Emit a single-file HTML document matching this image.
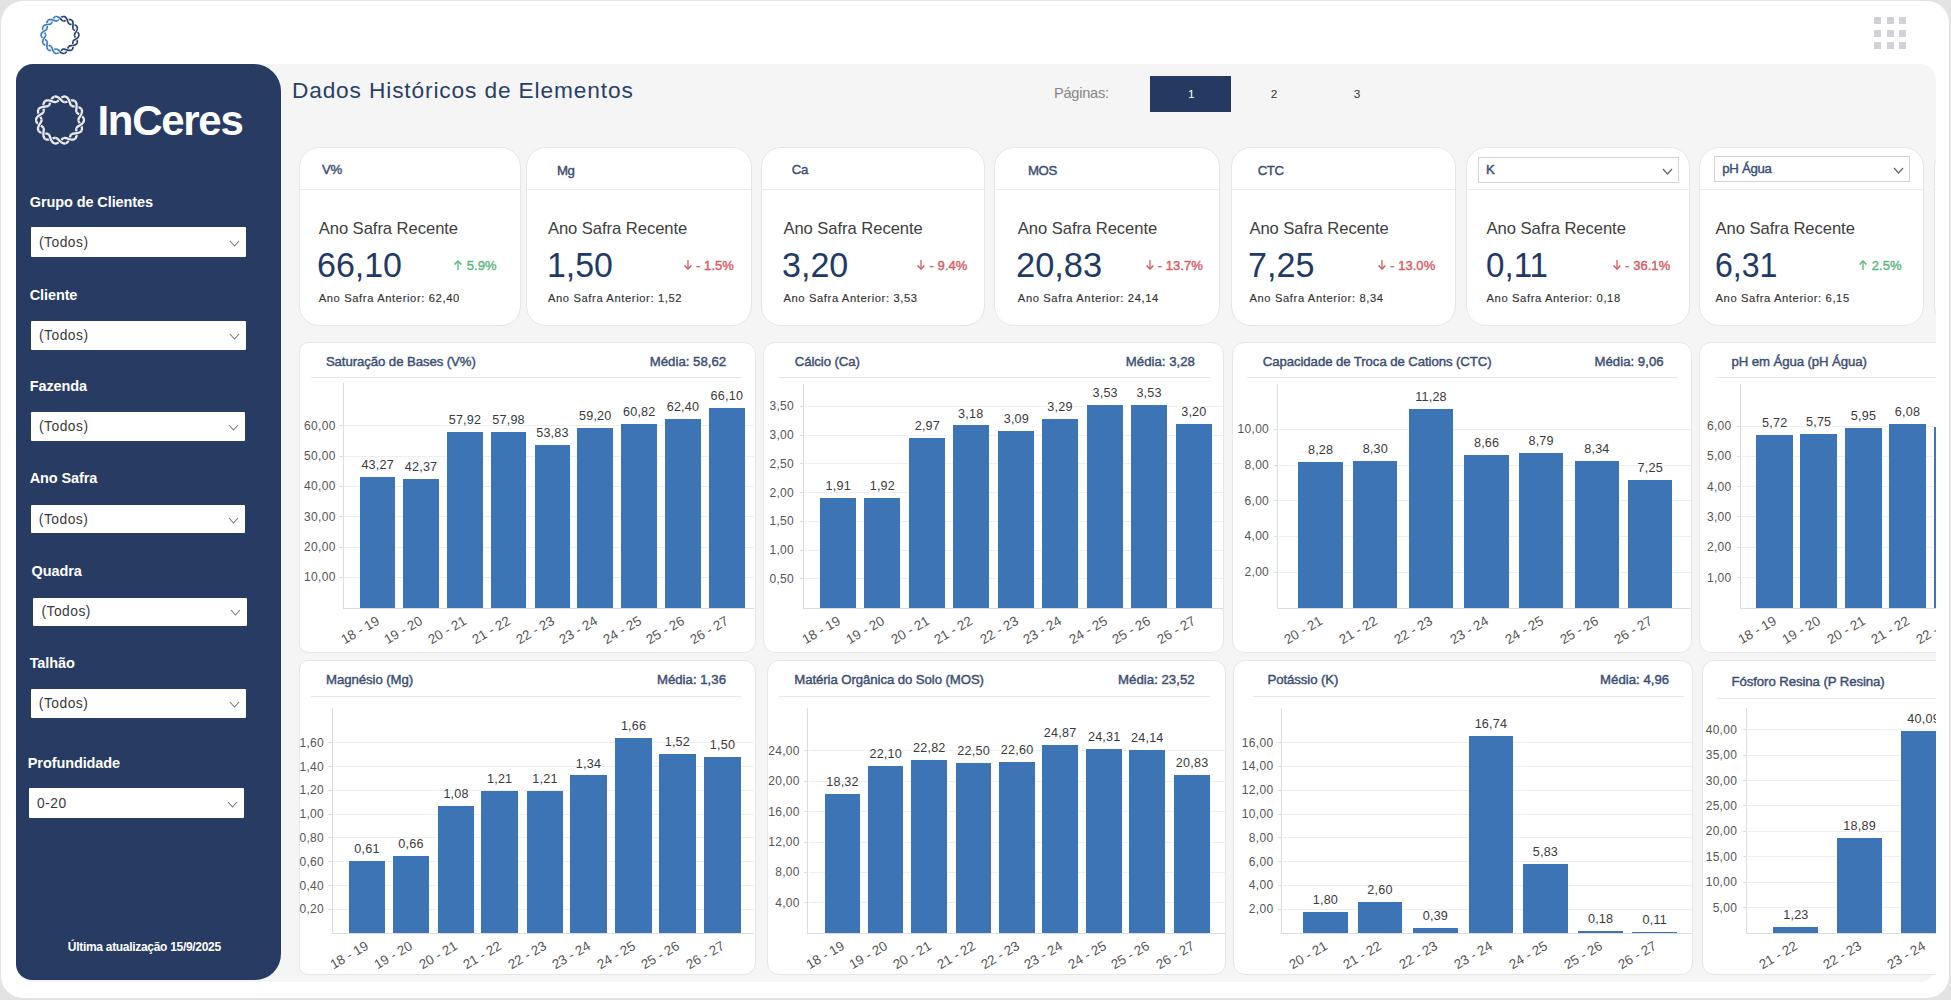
<!DOCTYPE html><html><head><meta charset="utf-8"><style>
html,body{margin:0;padding:0;}
body{width:1951px;height:1000px;overflow:hidden;background:#e3e3e3;position:relative;font-family:"Liberation Sans", sans-serif;}
.t{position:absolute;white-space:nowrap;}
.r{position:absolute;}
</style></head><body>
<div class="r" style="left:1.00px;top:1.00px;width:1948.00px;height:997.00px;background:#ffffff;border-radius:22px;"></div>
<div class="r" style="left:16.00px;top:64.00px;width:1920.00px;height:918.00px;background:#f5f5f5;border-radius:16px;"></div>
<svg style="position:absolute;left:40px;top:15px" width="40" height="40" viewBox="0 0 40 40"><path d="M38.90,20.00L38.86,20.49" stroke="#253f6e" stroke-width="1.7" fill="none"/><path d="M33.09,26.24L32.94,26.60L32.85,26.98L32.81,27.40L32.81,27.85L32.84,28.34L32.90,28.86L32.96,29.42L33.02,29.99L33.07,30.58L33.09,31.18L33.08,31.77L33.02,32.35L32.91,32.91L32.74,33.43L32.52,33.90L32.24,34.33L31.89,34.69L31.49,34.98" stroke="#253f6e" stroke-width="1.7" fill="none"/><path d="M23.39,34.11L23.02,34.19L22.66,34.35L22.31,34.56L21.95,34.83L21.59,35.14L21.22,35.50L20.83,35.89L20.43,36.29L20.00,36.70L19.55,37.10" stroke="#253f6e" stroke-width="1.7" fill="none"/><path d="M20.00,36.70L19.55,37.10L19.08,37.46L18.60,37.79L18.10,38.07L17.59,38.29L17.08,38.43L16.57,38.49L16.07,38.48L15.59,38.37" stroke="#3b7ac6" stroke-width="1.7" fill="none"/><path d="M11.16,31.52L10.87,31.27L10.54,31.07L10.17,30.92L9.75,30.80L9.29,30.71L8.79,30.64L8.25,30.58L7.69,30.51L7.11,30.44L6.52,30.34L5.94,30.22L5.37,30.05L4.83,29.85L4.33,29.60L3.89,29.30L3.50,28.96L3.18,28.57L2.94,28.14" stroke="#3b7ac6" stroke-width="1.7" fill="none"/><path d="M5.50,20.00L5.47,19.62L5.37,19.23L5.22,18.84L5.02,18.43L4.77,18.00L4.49,17.54L4.19,17.07L3.89,16.58L3.59,16.06L3.32,15.53L3.08,14.99L2.89,14.44L2.75,13.89L2.69,13.35L2.69,12.83L2.78,12.33L2.94,11.86L3.18,11.43" stroke="#3b7ac6" stroke-width="1.7" fill="none"/><path d="M10.87,8.73L11.16,8.48L11.41,8.18L11.64,7.83L11.84,7.43L12.02,6.98L12.20,6.49L12.38,5.97L12.57,5.43L12.79,4.87L13.02,4.33L13.29,3.79L13.59,3.29L13.92,2.83L14.29,2.42L14.69,2.08L15.13,1.82L15.59,1.63L16.07,1.52" stroke="#3b7ac6" stroke-width="1.7" fill="none"/><path d="M23.02,5.81L23.39,5.89L23.77,5.92L24.18,5.89L24.61,5.81L25.07,5.69L25.56,5.53L26.07,5.35L26.61,5.16L27.16,4.98L27.74,4.81L28.32,4.68L28.90,4.58L29.47,4.54L30.03,4.56L30.55,4.64L31.05,4.80L31.49,5.02L31.89,5.31" stroke="#253f6e" stroke-width="1.7" fill="none"/><path d="M32.94,13.40L33.09,13.76L33.29,14.08L33.55,14.39L33.87,14.68L34.24,14.96L34.65,15.24L35.10,15.53L35.58,15.83L36.07,16.14L36.56,16.48L37.03,16.84L37.48,17.23L37.88,17.65L38.23,18.08L38.52,18.54L38.73,19.02L38.86,19.51L38.90,20.00" stroke="#253f6e" stroke-width="1.7" fill="none"/><path d="M34.50,20.00L34.53,20.38L34.63,20.77L34.78,21.16L34.98,21.57L35.23,22.00L35.51,22.46L35.81,22.93L36.11,23.42L36.41,23.94L36.68,24.47L36.92,25.01L37.11,25.56L37.25,26.11L37.31,26.65L37.31,27.17L37.22,27.67L37.06,28.14L36.82,28.57" stroke="#253f6e" stroke-width="1.7" fill="none"/><path d="M29.13,31.27L28.84,31.52L28.59,31.82L28.36,32.17L28.16,32.57L27.98,33.02L27.80,33.51L27.62,34.03L27.43,34.57L27.21,35.13L26.98,35.67L26.71,36.21L26.41,36.71L26.08,37.17L25.71,37.58L25.31,37.92L24.87,38.18L24.41,38.37L23.93,38.48" stroke="#253f6e" stroke-width="1.7" fill="none"/><path d="M16.98,34.19L16.61,34.11L16.23,34.08L15.82,34.11L15.39,34.19L14.93,34.31L14.44,34.47L13.93,34.65L13.39,34.84L12.84,35.02L12.26,35.19L11.68,35.32L11.10,35.42L10.53,35.46L9.97,35.44L9.45,35.36L8.95,35.20L8.51,34.98L8.11,34.69" stroke="#3b7ac6" stroke-width="1.7" fill="none"/><path d="M7.06,26.60L6.91,26.24L6.71,25.92L6.45,25.61L6.13,25.32L5.76,25.04L5.35,24.76L4.90,24.47L4.42,24.17L3.93,23.86L3.44,23.52L2.97,23.16L2.52,22.77L2.12,22.35L1.77,21.92L1.48,21.46L1.27,20.98L1.14,20.49L1.10,20.00L1.14,19.51" stroke="#3b7ac6" stroke-width="1.7" fill="none"/><path d="M6.91,13.76L7.06,13.40L7.15,13.02L7.19,12.60L7.19,12.15L7.16,11.66L7.10,11.14L7.04,10.58L6.98,10.01L6.93,9.42L6.91,8.82L6.92,8.23L6.98,7.65L7.09,7.09L7.26,6.57L7.48,6.10L7.76,5.67L8.11,5.31L8.51,5.02" stroke="#3b7ac6" stroke-width="1.7" fill="none"/><path d="M16.61,5.89L16.98,5.81L17.34,5.65L17.69,5.44L18.05,5.17L18.41,4.86L18.78,4.50L19.17,4.11L19.57,3.71L20.00,3.30L20.45,2.90" stroke="#3b7ac6" stroke-width="1.7" fill="none"/><path d="M20.00,3.30L20.45,2.90L20.92,2.54L21.40,2.21L21.90,1.93L22.41,1.71L22.92,1.57L23.43,1.51L23.93,1.52L24.41,1.63" stroke="#253f6e" stroke-width="1.7" fill="none"/><path d="M28.84,8.48L29.13,8.73L29.46,8.93L29.83,9.08L30.25,9.20L30.71,9.29L31.21,9.36L31.75,9.42L32.31,9.49L32.89,9.56L33.48,9.66L34.06,9.78L34.63,9.95L35.17,10.15L35.67,10.40L36.11,10.70L36.50,11.04L36.82,11.43L37.06,11.86" stroke="#253f6e" stroke-width="1.7" fill="none"/><path d="M38.90,20.00L38.86,20.49L38.73,20.98L38.52,21.46L38.23,21.92L37.88,22.35L37.48,22.77L37.03,23.16L36.56,23.52L36.07,23.86L35.58,24.17L35.10,24.47L34.65,24.76L34.24,25.04L33.87,25.32L33.55,25.61L33.29,25.92L33.09,26.24L32.94,26.60" stroke="#ffffff" stroke-width="3.0999999999999996" fill="none" stroke-linecap="butt"/><path d="M31.89,34.69L31.49,34.98L31.05,35.20L30.55,35.36L30.03,35.44L29.47,35.46L28.90,35.42L28.32,35.32L27.74,35.19L27.16,35.02L26.61,34.84L26.07,34.65L25.56,34.47L25.07,34.31L24.61,34.19L24.18,34.11L23.77,34.08L23.39,34.11L23.02,34.19" stroke="#ffffff" stroke-width="3.0999999999999996" fill="none" stroke-linecap="butt"/><path d="M16.07,38.48L15.59,38.37L15.13,38.18L14.69,37.92L14.29,37.58L13.92,37.17L13.59,36.71L13.29,36.21L13.02,35.67L12.79,35.13L12.57,34.57L12.38,34.03L12.20,33.51L12.02,33.02L11.84,32.57L11.64,32.17L11.41,31.82L11.16,31.52L10.87,31.27" stroke="#ffffff" stroke-width="3.0999999999999996" fill="none" stroke-linecap="butt"/><path d="M3.18,28.57L2.94,28.14L2.78,27.67L2.69,27.17L2.69,26.65L2.75,26.11L2.89,25.56L3.08,25.01L3.32,24.47L3.59,23.94L3.89,23.42L4.19,22.93L4.49,22.46L4.77,22.00L5.02,21.57L5.22,21.16L5.37,20.77L5.47,20.38L5.50,20.00L5.47,19.62" stroke="#ffffff" stroke-width="3.0999999999999996" fill="none" stroke-linecap="butt"/><path d="M2.94,11.86L3.18,11.43L3.50,11.04L3.89,10.70L4.33,10.40L4.83,10.15L5.37,9.95L5.94,9.78L6.52,9.66L7.11,9.56L7.69,9.49L8.25,9.42L8.79,9.36L9.29,9.29L9.75,9.20L10.17,9.08L10.54,8.93L10.87,8.73L11.16,8.48" stroke="#ffffff" stroke-width="3.0999999999999996" fill="none" stroke-linecap="butt"/><path d="M15.59,1.63L16.07,1.52L16.57,1.51L17.08,1.57L17.59,1.71L18.10,1.93L18.60,2.21L19.08,2.54L19.55,2.90L20.00,3.30L20.43,3.71" stroke="#ffffff" stroke-width="3.0999999999999996" fill="none" stroke-linecap="butt"/><path d="M20.00,3.30L20.43,3.71L20.83,4.11L21.22,4.50L21.59,4.86L21.95,5.17L22.31,5.44L22.66,5.65L23.02,5.81L23.39,5.89" stroke="#ffffff" stroke-width="3.0999999999999996" fill="none" stroke-linecap="butt"/><path d="M31.49,5.02L31.89,5.31L32.24,5.67L32.52,6.10L32.74,6.57L32.91,7.09L33.02,7.65L33.08,8.23L33.09,8.82L33.07,9.42L33.02,10.01L32.96,10.58L32.90,11.14L32.84,11.66L32.81,12.15L32.81,12.60L32.85,13.02L32.94,13.40L33.09,13.76" stroke="#ffffff" stroke-width="3.0999999999999996" fill="none" stroke-linecap="butt"/><path d="M34.50,20.00L34.53,20.38" stroke="#ffffff" stroke-width="3.0999999999999996" fill="none" stroke-linecap="butt"/><path d="M37.06,28.14L36.82,28.57L36.50,28.96L36.11,29.30L35.67,29.60L35.17,29.85L34.63,30.05L34.06,30.22L33.48,30.34L32.89,30.44L32.31,30.51L31.75,30.58L31.21,30.64L30.71,30.71L30.25,30.80L29.83,30.92L29.46,31.07L29.13,31.27L28.84,31.52" stroke="#ffffff" stroke-width="3.0999999999999996" fill="none" stroke-linecap="butt"/><path d="M24.41,38.37L23.93,38.48L23.43,38.49L22.92,38.43L22.41,38.29L21.90,38.07L21.40,37.79L20.92,37.46L20.45,37.10L20.00,36.70L19.57,36.29" stroke="#ffffff" stroke-width="3.0999999999999996" fill="none" stroke-linecap="butt"/><path d="M20.00,36.70L19.57,36.29L19.17,35.89L18.78,35.50L18.41,35.14L18.05,34.83L17.69,34.56L17.34,34.35L16.98,34.19L16.61,34.11" stroke="#ffffff" stroke-width="3.0999999999999996" fill="none" stroke-linecap="butt"/><path d="M8.51,34.98L8.11,34.69L7.76,34.33L7.48,33.90L7.26,33.43L7.09,32.91L6.98,32.35L6.92,31.77L6.91,31.18L6.93,30.58L6.98,29.99L7.04,29.42L7.10,28.86L7.16,28.34L7.19,27.85L7.19,27.40L7.15,26.98L7.06,26.60L6.91,26.24" stroke="#ffffff" stroke-width="3.0999999999999996" fill="none" stroke-linecap="butt"/><path d="M1.10,20.00L1.14,19.51L1.27,19.02L1.48,18.54L1.77,18.08L2.12,17.65L2.52,17.23L2.97,16.84L3.44,16.48L3.93,16.14L4.42,15.83L4.90,15.53L5.35,15.24L5.76,14.96L6.13,14.68L6.45,14.39L6.71,14.08L6.91,13.76L7.06,13.40" stroke="#ffffff" stroke-width="3.0999999999999996" fill="none" stroke-linecap="butt"/><path d="M8.11,5.31L8.51,5.02L8.95,4.80L9.45,4.64L9.97,4.56L10.53,4.54L11.10,4.58L11.68,4.68L12.26,4.81L12.84,4.98L13.39,5.16L13.93,5.35L14.44,5.53L14.93,5.69L15.39,5.81L15.82,5.89L16.23,5.92L16.61,5.89L16.98,5.81" stroke="#ffffff" stroke-width="3.0999999999999996" fill="none" stroke-linecap="butt"/><path d="M23.93,1.52L24.41,1.63L24.87,1.82L25.31,2.08L25.71,2.42L26.08,2.83L26.41,3.29L26.71,3.79L26.98,4.33L27.21,4.87L27.43,5.43L27.62,5.97L27.80,6.49L27.98,6.98L28.16,7.43L28.36,7.83L28.59,8.18L28.84,8.48L29.13,8.73" stroke="#ffffff" stroke-width="3.0999999999999996" fill="none" stroke-linecap="butt"/><path d="M36.82,11.43L37.06,11.86L37.22,12.33L37.31,12.83L37.31,13.35L37.25,13.89L37.11,14.44L36.92,14.99L36.68,15.53L36.41,16.06L36.11,16.58L35.81,17.07L35.51,17.54L35.23,18.00L34.98,18.43L34.78,18.84L34.63,19.23L34.53,19.62L34.50,20.00" stroke="#ffffff" stroke-width="3.0999999999999996" fill="none" stroke-linecap="butt"/><path d="M38.90,20.00L38.86,20.49L38.73,20.98L38.52,21.46L38.23,21.92L37.88,22.35L37.48,22.77L37.03,23.16L36.56,23.52L36.07,23.86L35.58,24.17L35.10,24.47L34.65,24.76L34.24,25.04L33.87,25.32L33.55,25.61L33.29,25.92L33.09,26.24L32.94,26.60" stroke="#253f6e" stroke-width="1.7" fill="none"/><path d="M31.89,34.69L31.49,34.98L31.05,35.20L30.55,35.36L30.03,35.44L29.47,35.46L28.90,35.42L28.32,35.32L27.74,35.19L27.16,35.02L26.61,34.84L26.07,34.65L25.56,34.47L25.07,34.31L24.61,34.19L24.18,34.11L23.77,34.08L23.39,34.11L23.02,34.19" stroke="#253f6e" stroke-width="1.7" fill="none"/><path d="M16.07,38.48L15.59,38.37L15.13,38.18L14.69,37.92L14.29,37.58L13.92,37.17L13.59,36.71L13.29,36.21L13.02,35.67L12.79,35.13L12.57,34.57L12.38,34.03L12.20,33.51L12.02,33.02L11.84,32.57L11.64,32.17L11.41,31.82L11.16,31.52L10.87,31.27" stroke="#3b7ac6" stroke-width="1.7" fill="none"/><path d="M3.18,28.57L2.94,28.14L2.78,27.67L2.69,27.17L2.69,26.65L2.75,26.11L2.89,25.56L3.08,25.01L3.32,24.47L3.59,23.94L3.89,23.42L4.19,22.93L4.49,22.46L4.77,22.00L5.02,21.57L5.22,21.16L5.37,20.77L5.47,20.38L5.50,20.00L5.47,19.62" stroke="#3b7ac6" stroke-width="1.7" fill="none"/><path d="M2.94,11.86L3.18,11.43L3.50,11.04L3.89,10.70L4.33,10.40L4.83,10.15L5.37,9.95L5.94,9.78L6.52,9.66L7.11,9.56L7.69,9.49L8.25,9.42L8.79,9.36L9.29,9.29L9.75,9.20L10.17,9.08L10.54,8.93L10.87,8.73L11.16,8.48" stroke="#3b7ac6" stroke-width="1.7" fill="none"/><path d="M15.59,1.63L16.07,1.52L16.57,1.51L17.08,1.57L17.59,1.71L18.10,1.93L18.60,2.21L19.08,2.54L19.55,2.90L20.00,3.30L20.43,3.71" stroke="#3b7ac6" stroke-width="1.7" fill="none"/><path d="M20.00,3.30L20.43,3.71L20.83,4.11L21.22,4.50L21.59,4.86L21.95,5.17L22.31,5.44L22.66,5.65L23.02,5.81L23.39,5.89" stroke="#253f6e" stroke-width="1.7" fill="none"/><path d="M31.49,5.02L31.89,5.31L32.24,5.67L32.52,6.10L32.74,6.57L32.91,7.09L33.02,7.65L33.08,8.23L33.09,8.82L33.07,9.42L33.02,10.01L32.96,10.58L32.90,11.14L32.84,11.66L32.81,12.15L32.81,12.60L32.85,13.02L32.94,13.40L33.09,13.76" stroke="#253f6e" stroke-width="1.7" fill="none"/><path d="M34.50,20.00L34.53,20.38" stroke="#253f6e" stroke-width="1.7" fill="none"/><path d="M37.06,28.14L36.82,28.57L36.50,28.96L36.11,29.30L35.67,29.60L35.17,29.85L34.63,30.05L34.06,30.22L33.48,30.34L32.89,30.44L32.31,30.51L31.75,30.58L31.21,30.64L30.71,30.71L30.25,30.80L29.83,30.92L29.46,31.07L29.13,31.27L28.84,31.52" stroke="#253f6e" stroke-width="1.7" fill="none"/><path d="M24.41,38.37L23.93,38.48L23.43,38.49L22.92,38.43L22.41,38.29L21.90,38.07L21.40,37.79L20.92,37.46L20.45,37.10L20.00,36.70L19.57,36.29" stroke="#253f6e" stroke-width="1.7" fill="none"/><path d="M20.00,36.70L19.57,36.29L19.17,35.89L18.78,35.50L18.41,35.14L18.05,34.83L17.69,34.56L17.34,34.35L16.98,34.19L16.61,34.11" stroke="#3b7ac6" stroke-width="1.7" fill="none"/><path d="M8.51,34.98L8.11,34.69L7.76,34.33L7.48,33.90L7.26,33.43L7.09,32.91L6.98,32.35L6.92,31.77L6.91,31.18L6.93,30.58L6.98,29.99L7.04,29.42L7.10,28.86L7.16,28.34L7.19,27.85L7.19,27.40L7.15,26.98L7.06,26.60L6.91,26.24" stroke="#3b7ac6" stroke-width="1.7" fill="none"/><path d="M1.10,20.00L1.14,19.51L1.27,19.02L1.48,18.54L1.77,18.08L2.12,17.65L2.52,17.23L2.97,16.84L3.44,16.48L3.93,16.14L4.42,15.83L4.90,15.53L5.35,15.24L5.76,14.96L6.13,14.68L6.45,14.39L6.71,14.08L6.91,13.76L7.06,13.40" stroke="#3b7ac6" stroke-width="1.7" fill="none"/><path d="M8.11,5.31L8.51,5.02L8.95,4.80L9.45,4.64L9.97,4.56L10.53,4.54L11.10,4.58L11.68,4.68L12.26,4.81L12.84,4.98L13.39,5.16L13.93,5.35L14.44,5.53L14.93,5.69L15.39,5.81L15.82,5.89L16.23,5.92L16.61,5.89L16.98,5.81" stroke="#3b7ac6" stroke-width="1.7" fill="none"/><path d="M23.93,1.52L24.41,1.63L24.87,1.82L25.31,2.08L25.71,2.42L26.08,2.83L26.41,3.29L26.71,3.79L26.98,4.33L27.21,4.87L27.43,5.43L27.62,5.97L27.80,6.49L27.98,6.98L28.16,7.43L28.36,7.83L28.59,8.18L28.84,8.48L29.13,8.73" stroke="#253f6e" stroke-width="1.7" fill="none"/><path d="M36.82,11.43L37.06,11.86L37.22,12.33L37.31,12.83L37.31,13.35L37.25,13.89L37.11,14.44L36.92,14.99L36.68,15.53L36.41,16.06L36.11,16.58L35.81,17.07L35.51,17.54L35.23,18.00L34.98,18.43L34.78,18.84L34.63,19.23L34.53,19.62L34.50,20.00" stroke="#253f6e" stroke-width="1.7" fill="none"/></svg>
<div class="r" style="left:1874.00px;top:17.00px;width:7.00px;height:7.00px;background:#d0d2d7;"></div>
<div class="r" style="left:1874.00px;top:29.50px;width:7.00px;height:7.00px;background:#d0d2d7;"></div>
<div class="r" style="left:1874.00px;top:42.00px;width:7.00px;height:7.00px;background:#d0d2d7;"></div>
<div class="r" style="left:1886.50px;top:17.00px;width:7.00px;height:7.00px;background:#d0d2d7;"></div>
<div class="r" style="left:1886.50px;top:29.50px;width:7.00px;height:7.00px;background:#d0d2d7;"></div>
<div class="r" style="left:1886.50px;top:42.00px;width:7.00px;height:7.00px;background:#d0d2d7;"></div>
<div class="r" style="left:1899.00px;top:17.00px;width:7.00px;height:7.00px;background:#d0d2d7;"></div>
<div class="r" style="left:1899.00px;top:29.50px;width:7.00px;height:7.00px;background:#d0d2d7;"></div>
<div class="r" style="left:1899.00px;top:42.00px;width:7.00px;height:7.00px;background:#d0d2d7;"></div>
<div class="r" style="left:16.00px;top:64.00px;width:265.00px;height:916.00px;background:#283b62;border-radius:17px 27px 26px 16px;"></div>
<svg style="position:absolute;left:35px;top:95px" width="50" height="50" viewBox="0 0 50 50"><path d="M49.00,25.00L48.94,25.63" stroke="#e9ebef" stroke-width="2.3" fill="none"/><path d="M41.61,32.92L41.43,33.37L41.31,33.86L41.26,34.39L41.26,34.96L41.30,35.59L41.37,36.25L41.45,36.95L41.53,37.68L41.59,38.43L41.62,39.19L41.60,39.95L41.53,40.68L41.39,41.39L41.18,42.05L40.90,42.66L40.54,43.19L40.10,43.65L39.60,44.02" stroke="#e9ebef" stroke-width="2.3" fill="none"/><path d="M29.30,42.90L28.83,43.01L28.37,43.21L27.93,43.47L27.48,43.82L27.02,44.22L26.55,44.68L26.06,45.17L25.54,45.68L25.00,46.20L24.43,46.70L23.84,47.17L23.22,47.59L22.59,47.95L21.94,48.22L21.29,48.40L20.65,48.48L20.01,48.46L19.40,48.33" stroke="#e9ebef" stroke-width="2.3" fill="none"/><path d="M13.78,39.62L13.42,39.30L13.00,39.05L12.53,38.85L12.00,38.70L11.41,38.59L10.77,38.50L10.09,38.42L9.38,38.34L8.64,38.25L7.89,38.13L7.15,37.97L6.43,37.76L5.74,37.51L5.11,37.19L4.54,36.81L4.05,36.38L3.65,35.88L3.34,35.33" stroke="#e9ebef" stroke-width="2.3" fill="none"/><path d="M6.60,25.00L6.56,24.52L6.44,24.03L6.25,23.52L5.99,23.00L5.67,22.46L5.32,21.88L4.94,21.28L4.55,20.65L4.17,20.00L3.82,19.33L3.52,18.64L3.27,17.94L3.10,17.25L3.02,16.56L3.02,15.90L3.13,15.26L3.34,14.67L3.65,14.12" stroke="#e9ebef" stroke-width="2.3" fill="none"/><path d="M13.42,10.70L13.78,10.38L14.10,10.00L14.39,9.56L14.64,9.05L14.87,8.47L15.10,7.85L15.33,7.19L15.57,6.50L15.84,5.80L16.14,5.10L16.48,4.42L16.86,3.78L17.28,3.20L17.75,2.68L18.26,2.25L18.81,1.91L19.40,1.67L20.01,1.54" stroke="#e9ebef" stroke-width="2.3" fill="none"/><path d="M28.83,6.99L29.30,7.10L29.79,7.13L30.30,7.10L30.85,6.99L31.43,6.83L32.05,6.63L32.70,6.40L33.39,6.16L34.10,5.93L34.82,5.72L35.56,5.55L36.30,5.43L37.03,5.37L37.73,5.40L38.40,5.50L39.03,5.69L39.60,5.98L40.10,6.35" stroke="#e9ebef" stroke-width="2.3" fill="none"/><path d="M41.43,16.63L41.61,17.08L41.87,17.49L42.20,17.88L42.60,18.24L43.07,18.60L43.60,18.96L44.17,19.32L44.78,19.70L45.40,20.10L46.02,20.53L46.63,20.99L47.19,21.48L47.71,22.01L48.15,22.57L48.51,23.15L48.78,23.75L48.94,24.37L49.00,25.00" stroke="#e9ebef" stroke-width="2.3" fill="none"/><path d="M43.40,25.00L43.44,25.48L43.56,25.97L43.75,26.48L44.01,27.00L44.33,27.54L44.68,28.12L45.06,28.72L45.45,29.35L45.83,30.00L46.18,30.67L46.48,31.36L46.73,32.06L46.90,32.75L46.98,33.44L46.98,34.10L46.87,34.74L46.66,35.33L46.35,35.88" stroke="#e9ebef" stroke-width="2.3" fill="none"/><path d="M36.58,39.30L36.22,39.62L35.90,40.00L35.61,40.44L35.36,40.95L35.13,41.53L34.90,42.15L34.67,42.81L34.43,43.50L34.16,44.20L33.86,44.90L33.52,45.58L33.14,46.22L32.72,46.80L32.25,47.32L31.74,47.75L31.19,48.09L30.60,48.33L29.99,48.46" stroke="#e9ebef" stroke-width="2.3" fill="none"/><path d="M21.17,43.01L20.70,42.90L20.21,42.87L19.70,42.90L19.15,43.01L18.57,43.17L17.95,43.37L17.30,43.60L16.61,43.84L15.90,44.07L15.18,44.28L14.44,44.45L13.70,44.57L12.97,44.63L12.27,44.60L11.60,44.50L10.97,44.31L10.40,44.02L9.90,43.65" stroke="#e9ebef" stroke-width="2.3" fill="none"/><path d="M8.57,33.37L8.39,32.92L8.13,32.51L7.80,32.12L7.40,31.76L6.93,31.40L6.40,31.04L5.83,30.68L5.22,30.30L4.60,29.90L3.98,29.47L3.37,29.01L2.81,28.52L2.29,27.99L1.85,27.43L1.49,26.85L1.22,26.25L1.06,25.63L1.00,25.00L1.06,24.37" stroke="#e9ebef" stroke-width="2.3" fill="none"/><path d="M8.39,17.08L8.57,16.63L8.69,16.14L8.74,15.61L8.74,15.04L8.70,14.41L8.63,13.75L8.55,13.05L8.47,12.32L8.41,11.57L8.38,10.81L8.40,10.05L8.47,9.32L8.61,8.61L8.82,7.95L9.10,7.34L9.46,6.81L9.90,6.35L10.40,5.98" stroke="#e9ebef" stroke-width="2.3" fill="none"/><path d="M20.70,7.10L21.17,6.99L21.63,6.79L22.07,6.53L22.52,6.18L22.98,5.78L23.45,5.32L23.94,4.83L24.46,4.32L25.00,3.80L25.57,3.30L26.16,2.83L26.78,2.41L27.41,2.05L28.06,1.78L28.71,1.60L29.35,1.52L29.99,1.54L30.60,1.67" stroke="#e9ebef" stroke-width="2.3" fill="none"/><path d="M36.22,10.38L36.58,10.70L37.00,10.95L37.47,11.15L38.00,11.30L38.59,11.41L39.23,11.50L39.91,11.58L40.62,11.66L41.36,11.75L42.11,11.87L42.85,12.03L43.57,12.24L44.26,12.49L44.89,12.81L45.46,13.19L45.95,13.62L46.35,14.12L46.66,14.67" stroke="#e9ebef" stroke-width="2.3" fill="none"/><path d="M49.00,25.00L48.94,25.63L48.78,26.25L48.51,26.85L48.15,27.43L47.71,27.99L47.19,28.52L46.63,29.01L46.02,29.47L45.40,29.90L44.78,30.30L44.17,30.68L43.60,31.04L43.07,31.40L42.60,31.76L42.20,32.12L41.87,32.51L41.61,32.92L41.43,33.37" stroke="#283b62" stroke-width="3.6999999999999997" fill="none" stroke-linecap="butt"/><path d="M40.10,43.65L39.60,44.02L39.03,44.31L38.40,44.50L37.73,44.60L37.03,44.63L36.30,44.57L35.56,44.45L34.82,44.28L34.10,44.07L33.39,43.84L32.70,43.60L32.05,43.37L31.43,43.17L30.85,43.01L30.30,42.90L29.79,42.87L29.30,42.90L28.83,43.01" stroke="#283b62" stroke-width="3.6999999999999997" fill="none" stroke-linecap="butt"/><path d="M20.01,48.46L19.40,48.33L18.81,48.09L18.26,47.75L17.75,47.32L17.28,46.80L16.86,46.22L16.48,45.58L16.14,44.90L15.84,44.20L15.57,43.50L15.33,42.81L15.10,42.15L14.87,41.53L14.64,40.95L14.39,40.44L14.10,40.00L13.78,39.62L13.42,39.30" stroke="#283b62" stroke-width="3.6999999999999997" fill="none" stroke-linecap="butt"/><path d="M3.65,35.88L3.34,35.33L3.13,34.74L3.02,34.10L3.02,33.44L3.10,32.75L3.27,32.06L3.52,31.36L3.82,30.67L4.17,30.00L4.55,29.35L4.94,28.72L5.32,28.12L5.67,27.54L5.99,27.00L6.25,26.48L6.44,25.97L6.56,25.48L6.60,25.00L6.56,24.52" stroke="#283b62" stroke-width="3.6999999999999997" fill="none" stroke-linecap="butt"/><path d="M3.34,14.67L3.65,14.12L4.05,13.62L4.54,13.19L5.11,12.81L5.74,12.49L6.43,12.24L7.15,12.03L7.89,11.87L8.64,11.75L9.38,11.66L10.09,11.58L10.77,11.50L11.41,11.41L12.00,11.30L12.53,11.15L13.00,10.95L13.42,10.70L13.78,10.38" stroke="#283b62" stroke-width="3.6999999999999997" fill="none" stroke-linecap="butt"/><path d="M19.40,1.67L20.01,1.54L20.65,1.52L21.29,1.60L21.94,1.78L22.59,2.05L23.22,2.41L23.84,2.83L24.43,3.30L25.00,3.80L25.54,4.32L26.06,4.83L26.55,5.32L27.02,5.78L27.48,6.18L27.93,6.53L28.37,6.79L28.83,6.99L29.30,7.10" stroke="#283b62" stroke-width="3.6999999999999997" fill="none" stroke-linecap="butt"/><path d="M39.60,5.98L40.10,6.35L40.54,6.81L40.90,7.34L41.18,7.95L41.39,8.61L41.53,9.32L41.60,10.05L41.62,10.81L41.59,11.57L41.53,12.32L41.45,13.05L41.37,13.75L41.30,14.41L41.26,15.04L41.26,15.61L41.31,16.14L41.43,16.63L41.61,17.08" stroke="#283b62" stroke-width="3.6999999999999997" fill="none" stroke-linecap="butt"/><path d="M43.40,25.00L43.44,25.48" stroke="#283b62" stroke-width="3.6999999999999997" fill="none" stroke-linecap="butt"/><path d="M46.66,35.33L46.35,35.88L45.95,36.38L45.46,36.81L44.89,37.19L44.26,37.51L43.57,37.76L42.85,37.97L42.11,38.13L41.36,38.25L40.62,38.34L39.91,38.42L39.23,38.50L38.59,38.59L38.00,38.70L37.47,38.85L37.00,39.05L36.58,39.30L36.22,39.62" stroke="#283b62" stroke-width="3.6999999999999997" fill="none" stroke-linecap="butt"/><path d="M30.60,48.33L29.99,48.46L29.35,48.48L28.71,48.40L28.06,48.22L27.41,47.95L26.78,47.59L26.16,47.17L25.57,46.70L25.00,46.20L24.46,45.68L23.94,45.17L23.45,44.68L22.98,44.22L22.52,43.82L22.07,43.47L21.63,43.21L21.17,43.01L20.70,42.90" stroke="#283b62" stroke-width="3.6999999999999997" fill="none" stroke-linecap="butt"/><path d="M10.40,44.02L9.90,43.65L9.46,43.19L9.10,42.66L8.82,42.05L8.61,41.39L8.47,40.68L8.40,39.95L8.38,39.19L8.41,38.43L8.47,37.68L8.55,36.95L8.63,36.25L8.70,35.59L8.74,34.96L8.74,34.39L8.69,33.86L8.57,33.37L8.39,32.92" stroke="#283b62" stroke-width="3.6999999999999997" fill="none" stroke-linecap="butt"/><path d="M1.00,25.00L1.06,24.37L1.22,23.75L1.49,23.15L1.85,22.57L2.29,22.01L2.81,21.48L3.37,20.99L3.98,20.53L4.60,20.10L5.22,19.70L5.83,19.32L6.40,18.96L6.93,18.60L7.40,18.24L7.80,17.88L8.13,17.49L8.39,17.08L8.57,16.63" stroke="#283b62" stroke-width="3.6999999999999997" fill="none" stroke-linecap="butt"/><path d="M9.90,6.35L10.40,5.98L10.97,5.69L11.60,5.50L12.27,5.40L12.97,5.37L13.70,5.43L14.44,5.55L15.18,5.72L15.90,5.93L16.61,6.16L17.30,6.40L17.95,6.63L18.57,6.83L19.15,6.99L19.70,7.10L20.21,7.13L20.70,7.10L21.17,6.99" stroke="#283b62" stroke-width="3.6999999999999997" fill="none" stroke-linecap="butt"/><path d="M29.99,1.54L30.60,1.67L31.19,1.91L31.74,2.25L32.25,2.68L32.72,3.20L33.14,3.78L33.52,4.42L33.86,5.10L34.16,5.80L34.43,6.50L34.67,7.19L34.90,7.85L35.13,8.47L35.36,9.05L35.61,9.56L35.90,10.00L36.22,10.38L36.58,10.70" stroke="#283b62" stroke-width="3.6999999999999997" fill="none" stroke-linecap="butt"/><path d="M46.35,14.12L46.66,14.67L46.87,15.26L46.98,15.90L46.98,16.56L46.90,17.25L46.73,17.94L46.48,18.64L46.18,19.33L45.83,20.00L45.45,20.65L45.06,21.28L44.68,21.88L44.33,22.46L44.01,23.00L43.75,23.52L43.56,24.03L43.44,24.52L43.40,25.00" stroke="#283b62" stroke-width="3.6999999999999997" fill="none" stroke-linecap="butt"/><path d="M49.00,25.00L48.94,25.63L48.78,26.25L48.51,26.85L48.15,27.43L47.71,27.99L47.19,28.52L46.63,29.01L46.02,29.47L45.40,29.90L44.78,30.30L44.17,30.68L43.60,31.04L43.07,31.40L42.60,31.76L42.20,32.12L41.87,32.51L41.61,32.92L41.43,33.37" stroke="#e9ebef" stroke-width="2.3" fill="none"/><path d="M40.10,43.65L39.60,44.02L39.03,44.31L38.40,44.50L37.73,44.60L37.03,44.63L36.30,44.57L35.56,44.45L34.82,44.28L34.10,44.07L33.39,43.84L32.70,43.60L32.05,43.37L31.43,43.17L30.85,43.01L30.30,42.90L29.79,42.87L29.30,42.90L28.83,43.01" stroke="#e9ebef" stroke-width="2.3" fill="none"/><path d="M20.01,48.46L19.40,48.33L18.81,48.09L18.26,47.75L17.75,47.32L17.28,46.80L16.86,46.22L16.48,45.58L16.14,44.90L15.84,44.20L15.57,43.50L15.33,42.81L15.10,42.15L14.87,41.53L14.64,40.95L14.39,40.44L14.10,40.00L13.78,39.62L13.42,39.30" stroke="#e9ebef" stroke-width="2.3" fill="none"/><path d="M3.65,35.88L3.34,35.33L3.13,34.74L3.02,34.10L3.02,33.44L3.10,32.75L3.27,32.06L3.52,31.36L3.82,30.67L4.17,30.00L4.55,29.35L4.94,28.72L5.32,28.12L5.67,27.54L5.99,27.00L6.25,26.48L6.44,25.97L6.56,25.48L6.60,25.00L6.56,24.52" stroke="#e9ebef" stroke-width="2.3" fill="none"/><path d="M3.34,14.67L3.65,14.12L4.05,13.62L4.54,13.19L5.11,12.81L5.74,12.49L6.43,12.24L7.15,12.03L7.89,11.87L8.64,11.75L9.38,11.66L10.09,11.58L10.77,11.50L11.41,11.41L12.00,11.30L12.53,11.15L13.00,10.95L13.42,10.70L13.78,10.38" stroke="#e9ebef" stroke-width="2.3" fill="none"/><path d="M19.40,1.67L20.01,1.54L20.65,1.52L21.29,1.60L21.94,1.78L22.59,2.05L23.22,2.41L23.84,2.83L24.43,3.30L25.00,3.80L25.54,4.32L26.06,4.83L26.55,5.32L27.02,5.78L27.48,6.18L27.93,6.53L28.37,6.79L28.83,6.99L29.30,7.10" stroke="#e9ebef" stroke-width="2.3" fill="none"/><path d="M39.60,5.98L40.10,6.35L40.54,6.81L40.90,7.34L41.18,7.95L41.39,8.61L41.53,9.32L41.60,10.05L41.62,10.81L41.59,11.57L41.53,12.32L41.45,13.05L41.37,13.75L41.30,14.41L41.26,15.04L41.26,15.61L41.31,16.14L41.43,16.63L41.61,17.08" stroke="#e9ebef" stroke-width="2.3" fill="none"/><path d="M43.40,25.00L43.44,25.48" stroke="#e9ebef" stroke-width="2.3" fill="none"/><path d="M46.66,35.33L46.35,35.88L45.95,36.38L45.46,36.81L44.89,37.19L44.26,37.51L43.57,37.76L42.85,37.97L42.11,38.13L41.36,38.25L40.62,38.34L39.91,38.42L39.23,38.50L38.59,38.59L38.00,38.70L37.47,38.85L37.00,39.05L36.58,39.30L36.22,39.62" stroke="#e9ebef" stroke-width="2.3" fill="none"/><path d="M30.60,48.33L29.99,48.46L29.35,48.48L28.71,48.40L28.06,48.22L27.41,47.95L26.78,47.59L26.16,47.17L25.57,46.70L25.00,46.20L24.46,45.68L23.94,45.17L23.45,44.68L22.98,44.22L22.52,43.82L22.07,43.47L21.63,43.21L21.17,43.01L20.70,42.90" stroke="#e9ebef" stroke-width="2.3" fill="none"/><path d="M10.40,44.02L9.90,43.65L9.46,43.19L9.10,42.66L8.82,42.05L8.61,41.39L8.47,40.68L8.40,39.95L8.38,39.19L8.41,38.43L8.47,37.68L8.55,36.95L8.63,36.25L8.70,35.59L8.74,34.96L8.74,34.39L8.69,33.86L8.57,33.37L8.39,32.92" stroke="#e9ebef" stroke-width="2.3" fill="none"/><path d="M1.00,25.00L1.06,24.37L1.22,23.75L1.49,23.15L1.85,22.57L2.29,22.01L2.81,21.48L3.37,20.99L3.98,20.53L4.60,20.10L5.22,19.70L5.83,19.32L6.40,18.96L6.93,18.60L7.40,18.24L7.80,17.88L8.13,17.49L8.39,17.08L8.57,16.63" stroke="#e9ebef" stroke-width="2.3" fill="none"/><path d="M9.90,6.35L10.40,5.98L10.97,5.69L11.60,5.50L12.27,5.40L12.97,5.37L13.70,5.43L14.44,5.55L15.18,5.72L15.90,5.93L16.61,6.16L17.30,6.40L17.95,6.63L18.57,6.83L19.15,6.99L19.70,7.10L20.21,7.13L20.70,7.10L21.17,6.99" stroke="#e9ebef" stroke-width="2.3" fill="none"/><path d="M29.99,1.54L30.60,1.67L31.19,1.91L31.74,2.25L32.25,2.68L32.72,3.20L33.14,3.78L33.52,4.42L33.86,5.10L34.16,5.80L34.43,6.50L34.67,7.19L34.90,7.85L35.13,8.47L35.36,9.05L35.61,9.56L35.90,10.00L36.22,10.38L36.58,10.70" stroke="#e9ebef" stroke-width="2.3" fill="none"/><path d="M46.35,14.12L46.66,14.67L46.87,15.26L46.98,15.90L46.98,16.56L46.90,17.25L46.73,17.94L46.48,18.64L46.18,19.33L45.83,20.00L45.45,20.65L45.06,21.28L44.68,21.88L44.33,22.46L44.01,23.00L43.75,23.52L43.56,24.03L43.44,24.52L43.40,25.00" stroke="#e9ebef" stroke-width="2.3" fill="none"/></svg>
<div class="t" style="left:97.50px;top:99.54px;font-size:42px;line-height:42px;color:#ffffff;font-weight:700;letter-spacing:-1.3px;">InCeres</div>
<div class="t" style="left:29.80px;top:194.82px;font-size:14.5px;line-height:14.5px;color:#ffffff;font-weight:700;letter-spacing:-0.1px;">Grupo de Clientes</div>
<div class="r" style="left:31.00px;top:227.40px;width:215.00px;height:29.50px;background:#ffffff;border-radius:1px;"></div>
<div class="t" style="left:39.00px;top:235.97px;font-size:13.8px;line-height:13.8px;color:#3a3a3a;letter-spacing:0.5px;">(Todos)</div>
<svg style="position:absolute;left:229.0px;top:239.7px" width="11" height="7" viewBox="-1 -1 11 7"><path d="M0,0 L4.5,5 L9,0" fill="none" stroke="#777" stroke-width="1.1"/></svg>
<div class="t" style="left:29.70px;top:288.42px;font-size:14.5px;line-height:14.5px;color:#ffffff;font-weight:700;letter-spacing:-0.1px;">Cliente</div>
<div class="r" style="left:31.00px;top:320.80px;width:215.00px;height:29.70px;background:#ffffff;border-radius:1px;"></div>
<div class="t" style="left:39.00px;top:329.47px;font-size:13.8px;line-height:13.8px;color:#3a3a3a;letter-spacing:0.5px;">(Todos)</div>
<svg style="position:absolute;left:229.0px;top:333.2px" width="11" height="7" viewBox="-1 -1 11 7"><path d="M0,0 L4.5,5 L9,0" fill="none" stroke="#777" stroke-width="1.1"/></svg>
<div class="t" style="left:29.70px;top:379.02px;font-size:14.5px;line-height:14.5px;color:#ffffff;font-weight:700;letter-spacing:-0.1px;">Fazenda</div>
<div class="r" style="left:31.00px;top:412.20px;width:214.00px;height:28.50px;background:#ffffff;border-radius:1px;"></div>
<div class="t" style="left:39.00px;top:420.27px;font-size:13.8px;line-height:13.8px;color:#3a3a3a;letter-spacing:0.5px;">(Todos)</div>
<svg style="position:absolute;left:228.0px;top:423.9px" width="11" height="7" viewBox="-1 -1 11 7"><path d="M0,0 L4.5,5 L9,0" fill="none" stroke="#777" stroke-width="1.1"/></svg>
<div class="t" style="left:29.70px;top:470.72px;font-size:14.5px;line-height:14.5px;color:#ffffff;font-weight:700;letter-spacing:-0.1px;">Ano Safra</div>
<div class="r" style="left:30.80px;top:505.10px;width:214.60px;height:28.00px;background:#ffffff;border-radius:1px;"></div>
<div class="t" style="left:38.80px;top:512.92px;font-size:13.8px;line-height:13.8px;color:#3a3a3a;letter-spacing:0.5px;">(Todos)</div>
<svg style="position:absolute;left:228.4px;top:516.6px" width="11" height="7" viewBox="-1 -1 11 7"><path d="M0,0 L4.5,5 L9,0" fill="none" stroke="#777" stroke-width="1.1"/></svg>
<div class="t" style="left:31.50px;top:563.52px;font-size:14.5px;line-height:14.5px;color:#ffffff;font-weight:700;letter-spacing:-0.1px;">Quadra</div>
<div class="r" style="left:33.40px;top:597.60px;width:213.80px;height:28.00px;background:#ffffff;border-radius:1px;"></div>
<div class="t" style="left:41.40px;top:605.42px;font-size:13.8px;line-height:13.8px;color:#3a3a3a;letter-spacing:0.5px;">(Todos)</div>
<svg style="position:absolute;left:230.2px;top:609.1px" width="11" height="7" viewBox="-1 -1 11 7"><path d="M0,0 L4.5,5 L9,0" fill="none" stroke="#777" stroke-width="1.1"/></svg>
<div class="t" style="left:29.70px;top:656.02px;font-size:14.5px;line-height:14.5px;color:#ffffff;font-weight:700;letter-spacing:-0.1px;">Talhão</div>
<div class="r" style="left:30.80px;top:688.60px;width:215.30px;height:29.30px;background:#ffffff;border-radius:1px;"></div>
<div class="t" style="left:38.80px;top:697.07px;font-size:13.8px;line-height:13.8px;color:#3a3a3a;letter-spacing:0.5px;">(Todos)</div>
<svg style="position:absolute;left:229.1px;top:700.8px" width="11" height="7" viewBox="-1 -1 11 7"><path d="M0,0 L4.5,5 L9,0" fill="none" stroke="#777" stroke-width="1.1"/></svg>
<div class="t" style="left:27.80px;top:755.52px;font-size:14.5px;line-height:14.5px;color:#ffffff;font-weight:700;letter-spacing:-0.1px;">Profundidade</div>
<div class="r" style="left:29.00px;top:788.20px;width:214.50px;height:29.50px;background:#ffffff;border-radius:1px;"></div>
<div class="t" style="left:37.00px;top:796.77px;font-size:13.8px;line-height:13.8px;color:#3a3a3a;letter-spacing:0.5px;">0-20</div>
<svg style="position:absolute;left:226.5px;top:800.5px" width="11" height="7" viewBox="-1 -1 11 7"><path d="M0,0 L4.5,5 L9,0" fill="none" stroke="#777" stroke-width="1.1"/></svg>
<div class="t" style="left:-155.65px;top:941.14px;font-size:12px;line-height:12px;color:#ffffff;font-weight:700;letter-spacing:-0.3px;width:600px;text-align:center;">Última atualização 15/9/2025</div>
<div class="t" style="left:291.90px;top:78.98px;font-size:22.7px;line-height:22.7px;color:#2a3f66;letter-spacing:0.87px;">Dados Históricos de Elementos</div>
<div class="t" style="left:1054.00px;top:85.94px;font-size:14.6px;line-height:14.6px;color:#858585;letter-spacing:-0.25px;">Páginas:</div>
<div class="r" style="left:1150.20px;top:75.80px;width:80.70px;height:36.00px;background:#263a61;"></div>
<div class="t" style="left:891.20px;top:88.71px;font-size:11.8px;line-height:11.8px;color:#ffffff;width:600px;text-align:center;">1</div>
<div class="t" style="left:974.00px;top:88.71px;font-size:11.8px;line-height:11.8px;color:#333333;width:600px;text-align:center;">2</div>
<div class="t" style="left:1057.00px;top:88.71px;font-size:11.8px;line-height:11.8px;color:#333333;width:600px;text-align:center;">3</div>
<div style="position:absolute;left:0;top:0;width:1936px;height:1000px;overflow:hidden;">
<div class="r" style="left:299.00px;top:146.80px;width:222.00px;height:179.60px;background:#ffffff;border-radius:20px;box-sizing:border-box;border:1px solid #e6e6e6;"></div>
<div class="r" style="left:300.00px;top:188.60px;width:220.00px;height:1.30px;background:#ececec;"></div>
<div class="t" style="left:322.00px;top:162.72px;font-size:13.2px;line-height:13.2px;color:#3b4d72;-webkit-text-stroke:0.41px #3b4d72;letter-spacing:-0.4px;">V%</div>
<div class="t" style="left:318.70px;top:221.24px;font-size:16.6px;line-height:16.6px;color:#3d3d3d;letter-spacing:-0.05px;">Ano Safra Recente</div>
<div class="t" style="left:317.48px;top:247.74px;font-size:35.5px;line-height:35.5px;color:#213966;transform:scaleX(0.9568);transform-origin:0 0;">66,10</div>
<div class="t" style="left:-103.35px;top:258.79px;font-size:13px;line-height:13px;color:#5bb784;-webkit-text-stroke:0.40px #5bb784;letter-spacing:0.05px;width:600px;text-align:right;">5.9%</div>
<svg style="position:absolute;left:454.32px;top:259.9px" width="8" height="10" viewBox="0 0 8 10"><path d="M4,10 L4,1.2" stroke="#5bb784" stroke-width="1.3" fill="none"/><path d="M0.6,4.6 L4,1 L7.4,4.6" stroke="#5bb784" stroke-width="1.5" fill="none"/></svg>
<div class="t" style="left:318.70px;top:293.22px;font-size:11.2px;line-height:11.2px;color:#333333;-webkit-text-stroke:0.15px #333333;letter-spacing:0.62px;">Ano Safra Anterior: 62,40</div>
<div class="r" style="left:526.00px;top:146.80px;width:225.50px;height:179.60px;background:#ffffff;border-radius:20px;box-sizing:border-box;border:1px solid #e6e6e6;"></div>
<div class="r" style="left:527.00px;top:188.60px;width:223.50px;height:1.30px;background:#ececec;"></div>
<div class="t" style="left:556.90px;top:163.82px;font-size:13.2px;line-height:13.2px;color:#3b4d72;-webkit-text-stroke:0.41px #3b4d72;letter-spacing:-0.4px;">Mg</div>
<div class="t" style="left:547.90px;top:221.24px;font-size:16.6px;line-height:16.6px;color:#3d3d3d;letter-spacing:-0.05px;">Ano Safra Recente</div>
<div class="t" style="left:547.42px;top:247.74px;font-size:35.5px;line-height:35.5px;color:#213966;transform:scaleX(0.9539);transform-origin:0 0;">1,50</div>
<div class="t" style="left:133.95px;top:258.79px;font-size:13px;line-height:13px;color:#d85a64;-webkit-text-stroke:0.40px #d85a64;letter-spacing:0.05px;width:600px;text-align:right;">- 1.5%</div>
<svg style="position:absolute;left:683.98px;top:259.9px" width="8" height="10" viewBox="0 0 8 10"><path d="M4,0 L4,8.8" stroke="#d85a64" stroke-width="1.3" fill="none"/><path d="M0.6,5.4 L4,9 L7.4,5.4" stroke="#d85a64" stroke-width="1.5" fill="none"/></svg>
<div class="t" style="left:547.90px;top:293.22px;font-size:11.2px;line-height:11.2px;color:#333333;-webkit-text-stroke:0.15px #333333;letter-spacing:0.62px;">Ano Safra Anterior: 1,52</div>
<div class="r" style="left:761.40px;top:146.80px;width:224.10px;height:179.60px;background:#ffffff;border-radius:20px;box-sizing:border-box;border:1px solid #e6e6e6;"></div>
<div class="r" style="left:762.40px;top:188.60px;width:222.10px;height:1.30px;background:#ececec;"></div>
<div class="t" style="left:791.80px;top:162.92px;font-size:13.2px;line-height:13.2px;color:#3b4d72;-webkit-text-stroke:0.41px #3b4d72;letter-spacing:-0.4px;">Ca</div>
<div class="t" style="left:783.40px;top:221.24px;font-size:16.6px;line-height:16.6px;color:#3d3d3d;letter-spacing:-0.05px;">Ano Safra Recente</div>
<div class="t" style="left:782.26px;top:247.74px;font-size:35.5px;line-height:35.5px;color:#213966;transform:scaleX(0.9593);transform-origin:0 0;">3,20</div>
<div class="t" style="left:367.45px;top:258.79px;font-size:13px;line-height:13px;color:#d85a64;-webkit-text-stroke:0.40px #d85a64;letter-spacing:0.05px;width:600px;text-align:right;">- 9.4%</div>
<svg style="position:absolute;left:917.48px;top:259.9px" width="8" height="10" viewBox="0 0 8 10"><path d="M4,0 L4,8.8" stroke="#d85a64" stroke-width="1.3" fill="none"/><path d="M0.6,5.4 L4,9 L7.4,5.4" stroke="#d85a64" stroke-width="1.5" fill="none"/></svg>
<div class="t" style="left:783.40px;top:293.22px;font-size:11.2px;line-height:11.2px;color:#333333;-webkit-text-stroke:0.15px #333333;letter-spacing:0.62px;">Ano Safra Anterior: 3,53</div>
<div class="r" style="left:994.40px;top:146.80px;width:225.60px;height:179.60px;background:#ffffff;border-radius:20px;box-sizing:border-box;border:1px solid #e6e6e6;"></div>
<div class="r" style="left:995.40px;top:188.60px;width:223.60px;height:1.30px;background:#ececec;"></div>
<div class="t" style="left:1028.00px;top:163.82px;font-size:13.2px;line-height:13.2px;color:#3b4d72;-webkit-text-stroke:0.41px #3b4d72;letter-spacing:-0.4px;">MOS</div>
<div class="t" style="left:1017.80px;top:221.24px;font-size:16.6px;line-height:16.6px;color:#3d3d3d;letter-spacing:-0.05px;">Ano Safra Recente</div>
<div class="t" style="left:1016.05px;top:247.74px;font-size:35.5px;line-height:35.5px;color:#213966;transform:scaleX(0.9696);transform-origin:0 0;">20,83</div>
<div class="t" style="left:602.85px;top:258.79px;font-size:13px;line-height:13px;color:#d85a64;-webkit-text-stroke:0.40px #d85a64;letter-spacing:0.05px;width:600px;text-align:right;">- 13.7%</div>
<svg style="position:absolute;left:1145.60px;top:259.9px" width="8" height="10" viewBox="0 0 8 10"><path d="M4,0 L4,8.8" stroke="#d85a64" stroke-width="1.3" fill="none"/><path d="M0.6,5.4 L4,9 L7.4,5.4" stroke="#d85a64" stroke-width="1.5" fill="none"/></svg>
<div class="t" style="left:1017.80px;top:293.22px;font-size:11.2px;line-height:11.2px;color:#333333;-webkit-text-stroke:0.15px #333333;letter-spacing:0.62px;">Ano Safra Anterior: 24,14</div>
<div class="r" style="left:1230.50px;top:146.80px;width:225.50px;height:179.60px;background:#ffffff;border-radius:20px;box-sizing:border-box;border:1px solid #e6e6e6;"></div>
<div class="r" style="left:1231.50px;top:188.60px;width:223.50px;height:1.30px;background:#ececec;"></div>
<div class="t" style="left:1257.70px;top:163.82px;font-size:13.2px;line-height:13.2px;color:#3b4d72;-webkit-text-stroke:0.41px #3b4d72;letter-spacing:-0.4px;">CTC</div>
<div class="t" style="left:1249.40px;top:221.24px;font-size:16.6px;line-height:16.6px;color:#3d3d3d;letter-spacing:-0.05px;">Ano Safra Recente</div>
<div class="t" style="left:1247.97px;top:247.74px;font-size:35.5px;line-height:35.5px;color:#213966;transform:scaleX(0.9605);transform-origin:0 0;">7,25</div>
<div class="t" style="left:835.25px;top:258.79px;font-size:13px;line-height:13px;color:#d85a64;-webkit-text-stroke:0.40px #d85a64;letter-spacing:0.05px;width:600px;text-align:right;">- 13.0%</div>
<svg style="position:absolute;left:1378.00px;top:259.9px" width="8" height="10" viewBox="0 0 8 10"><path d="M4,0 L4,8.8" stroke="#d85a64" stroke-width="1.3" fill="none"/><path d="M0.6,5.4 L4,9 L7.4,5.4" stroke="#d85a64" stroke-width="1.5" fill="none"/></svg>
<div class="t" style="left:1249.40px;top:293.22px;font-size:11.2px;line-height:11.2px;color:#333333;-webkit-text-stroke:0.15px #333333;letter-spacing:0.62px;">Ano Safra Anterior: 8,34</div>
<div class="r" style="left:1465.50px;top:146.80px;width:224.90px;height:179.60px;background:#ffffff;border-radius:20px;box-sizing:border-box;border:1px solid #e6e6e6;"></div>
<div class="r" style="left:1466.50px;top:188.60px;width:222.90px;height:1.30px;background:#ececec;"></div>
<div class="r" style="left:1478.00px;top:157.20px;width:201.00px;height:26.00px;background:#ffffff;box-sizing:border-box;border:1px solid #d3d3d3;"></div>
<div class="t" style="left:1486.00px;top:163.32px;font-size:13.2px;line-height:13.2px;color:#3b4d72;-webkit-text-stroke:0.41px #3b4d72;letter-spacing:-0.3px;">K</div>
<svg style="position:absolute;left:1662.0px;top:167.7px" width="11" height="7" viewBox="-1 -1 11 7"><path d="M0,0 L4.5,5 L9,0" fill="none" stroke="#666" stroke-width="1.2"/></svg>
<div class="t" style="left:1486.50px;top:221.24px;font-size:16.6px;line-height:16.6px;color:#3d3d3d;letter-spacing:-0.05px;">Ano Safra Recente</div>
<div class="t" style="left:1485.79px;top:247.74px;font-size:35.5px;line-height:35.5px;color:#213966;transform:scaleX(0.9336);transform-origin:0 0;">0,11</div>
<div class="t" style="left:1070.25px;top:258.79px;font-size:13px;line-height:13px;color:#d85a64;-webkit-text-stroke:0.40px #d85a64;letter-spacing:0.05px;width:600px;text-align:right;">- 36.1%</div>
<svg style="position:absolute;left:1613.00px;top:259.9px" width="8" height="10" viewBox="0 0 8 10"><path d="M4,0 L4,8.8" stroke="#d85a64" stroke-width="1.3" fill="none"/><path d="M0.6,5.4 L4,9 L7.4,5.4" stroke="#d85a64" stroke-width="1.5" fill="none"/></svg>
<div class="t" style="left:1486.50px;top:293.22px;font-size:11.2px;line-height:11.2px;color:#333333;-webkit-text-stroke:0.15px #333333;letter-spacing:0.62px;">Ano Safra Anterior: 0,18</div>
<div class="r" style="left:1698.50px;top:146.80px;width:225.90px;height:179.60px;background:#ffffff;border-radius:20px;box-sizing:border-box;border:1px solid #e6e6e6;"></div>
<div class="r" style="left:1699.50px;top:188.60px;width:223.90px;height:1.30px;background:#ececec;"></div>
<div class="r" style="left:1714.30px;top:156.30px;width:195.40px;height:26.20px;background:#ffffff;box-sizing:border-box;border:1px solid #d3d3d3;"></div>
<div class="t" style="left:1722.30px;top:162.42px;font-size:13.2px;line-height:13.2px;color:#3b4d72;-webkit-text-stroke:0.41px #3b4d72;letter-spacing:-0.3px;">pH Água</div>
<svg style="position:absolute;left:1892.7px;top:166.8px" width="11" height="7" viewBox="-1 -1 11 7"><path d="M0,0 L4.5,5 L9,0" fill="none" stroke="#666" stroke-width="1.2"/></svg>
<div class="t" style="left:1715.50px;top:221.24px;font-size:16.6px;line-height:16.6px;color:#3d3d3d;letter-spacing:-0.05px;">Ano Safra Recente</div>
<div class="t" style="left:1714.57px;top:247.74px;font-size:35.5px;line-height:35.5px;color:#213966;transform:scaleX(0.9040);transform-origin:0 0;">6,31</div>
<div class="t" style="left:1301.65px;top:258.79px;font-size:13px;line-height:13px;color:#5bb784;-webkit-text-stroke:0.40px #5bb784;letter-spacing:0.05px;width:600px;text-align:right;">2.5%</div>
<svg style="position:absolute;left:1859.32px;top:259.9px" width="8" height="10" viewBox="0 0 8 10"><path d="M4,10 L4,1.2" stroke="#5bb784" stroke-width="1.3" fill="none"/><path d="M0.6,4.6 L4,1 L7.4,4.6" stroke="#5bb784" stroke-width="1.5" fill="none"/></svg>
<div class="t" style="left:1715.50px;top:293.22px;font-size:11.2px;line-height:11.2px;color:#333333;-webkit-text-stroke:0.15px #333333;letter-spacing:0.62px;">Ano Safra Anterior: 6,15</div>
<div class="r" style="left:1933.50px;top:146.80px;width:226.50px;height:179.60px;background:#ffffff;border-radius:20px;box-sizing:border-box;border:1px solid #e6e6e6;"></div>
<div class="r" style="left:1934.50px;top:188.60px;width:224.50px;height:1.30px;background:#ececec;"></div>
<div class="r" style="left:299.00px;top:342.00px;width:456.50px;height:310.50px;background:#ffffff;border-radius:9px 12px 12px 9px;box-sizing:border-box;border:1px solid #e6e6e6;"></div>
<div class="t" style="left:325.90px;top:354.82px;font-size:13.2px;line-height:13.2px;color:#3b4d72;-webkit-text-stroke:0.41px #3b4d72;letter-spacing:-0.08px;">Saturação de Bases (V%)</div>
<div class="t" style="left:126.22px;top:354.82px;font-size:13.2px;line-height:13.2px;color:#3b4d72;-webkit-text-stroke:0.41px #3b4d72;letter-spacing:0.02px;width:600px;text-align:right;">Média: 58,62</div>
<div class="r" style="left:311.00px;top:376.90px;width:430.00px;height:1.00px;background:#e8e8e8;"></div>
<div class="r" style="left:344.30px;top:576.95px;width:410.20px;height:1.00px;background:#efefef;"></div>
<div class="r" style="left:339.30px;top:576.95px;width:4.00px;height:1.00px;background:#dddddd;"></div>
<div class="t" style="left:-264.40px;top:571.49px;font-size:12px;line-height:12px;color:#555555;letter-spacing:0.3px;width:600px;text-align:right;">10,00</div>
<div class="r" style="left:344.30px;top:546.60px;width:410.20px;height:1.00px;background:#efefef;"></div>
<div class="r" style="left:339.30px;top:546.60px;width:4.00px;height:1.00px;background:#dddddd;"></div>
<div class="t" style="left:-264.40px;top:541.14px;font-size:12px;line-height:12px;color:#555555;letter-spacing:0.3px;width:600px;text-align:right;">20,00</div>
<div class="r" style="left:344.30px;top:516.25px;width:410.20px;height:1.00px;background:#efefef;"></div>
<div class="r" style="left:339.30px;top:516.25px;width:4.00px;height:1.00px;background:#dddddd;"></div>
<div class="t" style="left:-264.40px;top:510.79px;font-size:12px;line-height:12px;color:#555555;letter-spacing:0.3px;width:600px;text-align:right;">30,00</div>
<div class="r" style="left:344.30px;top:485.90px;width:410.20px;height:1.00px;background:#efefef;"></div>
<div class="r" style="left:339.30px;top:485.90px;width:4.00px;height:1.00px;background:#dddddd;"></div>
<div class="t" style="left:-264.40px;top:480.44px;font-size:12px;line-height:12px;color:#555555;letter-spacing:0.3px;width:600px;text-align:right;">40,00</div>
<div class="r" style="left:344.30px;top:455.55px;width:410.20px;height:1.00px;background:#efefef;"></div>
<div class="r" style="left:339.30px;top:455.55px;width:4.00px;height:1.00px;background:#dddddd;"></div>
<div class="t" style="left:-264.40px;top:450.09px;font-size:12px;line-height:12px;color:#555555;letter-spacing:0.3px;width:600px;text-align:right;">50,00</div>
<div class="r" style="left:344.30px;top:425.20px;width:410.20px;height:1.00px;background:#efefef;"></div>
<div class="r" style="left:339.30px;top:425.20px;width:4.00px;height:1.00px;background:#dddddd;"></div>
<div class="t" style="left:-264.40px;top:419.74px;font-size:12px;line-height:12px;color:#555555;letter-spacing:0.3px;width:600px;text-align:right;">60,00</div>
<div class="r" style="left:342.80px;top:382.70px;width:1.00px;height:225.10px;background:#dcdcdc;"></div>
<div class="r" style="left:342.80px;top:607.80px;width:411.20px;height:1.00px;background:#dcdcdc;"></div>
<div class="r" style="left:359.80px;top:476.69px;width:35.50px;height:131.11px;background:#3c74b6;"></div>
<div class="t" style="left:77.65px;top:458.72px;font-size:12.6px;line-height:12.6px;color:#3a3a3a;letter-spacing:0.2px;width:600px;text-align:center;">43,27</div>
<div class="t" style="left:295.05px;top:613.80px;width:80px;text-align:right;font-size:13.4px;line-height:13.4px;color:#555;transform-origin:100% 0;transform:rotate(-30deg);">18 - 19</div>
<div class="r" style="left:403.20px;top:479.42px;width:35.50px;height:128.38px;background:#3c74b6;"></div>
<div class="t" style="left:121.05px;top:461.45px;font-size:12.6px;line-height:12.6px;color:#3a3a3a;letter-spacing:0.2px;width:600px;text-align:center;">42,37</div>
<div class="t" style="left:338.45px;top:613.80px;width:80px;text-align:right;font-size:13.4px;line-height:13.4px;color:#555;transform-origin:100% 0;transform:rotate(-30deg);">19 - 20</div>
<div class="r" style="left:447.10px;top:432.30px;width:35.50px;height:175.50px;background:#3c74b6;"></div>
<div class="t" style="left:164.95px;top:414.33px;font-size:12.6px;line-height:12.6px;color:#3a3a3a;letter-spacing:0.2px;width:600px;text-align:center;">57,92</div>
<div class="t" style="left:382.35px;top:613.80px;width:80px;text-align:right;font-size:13.4px;line-height:13.4px;color:#555;transform-origin:100% 0;transform:rotate(-30deg);">20 - 21</div>
<div class="r" style="left:490.70px;top:432.12px;width:35.50px;height:175.68px;background:#3c74b6;"></div>
<div class="t" style="left:208.55px;top:414.15px;font-size:12.6px;line-height:12.6px;color:#3a3a3a;letter-spacing:0.2px;width:600px;text-align:center;">57,98</div>
<div class="t" style="left:425.95px;top:613.80px;width:80px;text-align:right;font-size:13.4px;line-height:13.4px;color:#555;transform-origin:100% 0;transform:rotate(-30deg);">21 - 22</div>
<div class="r" style="left:534.60px;top:444.70px;width:35.50px;height:163.10px;background:#3c74b6;"></div>
<div class="t" style="left:252.45px;top:426.73px;font-size:12.6px;line-height:12.6px;color:#3a3a3a;letter-spacing:0.2px;width:600px;text-align:center;">53,83</div>
<div class="t" style="left:469.85px;top:613.80px;width:80px;text-align:right;font-size:13.4px;line-height:13.4px;color:#555;transform-origin:100% 0;transform:rotate(-30deg);">22 - 23</div>
<div class="r" style="left:577.40px;top:428.42px;width:35.50px;height:179.38px;background:#3c74b6;"></div>
<div class="t" style="left:295.25px;top:410.46px;font-size:12.6px;line-height:12.6px;color:#3a3a3a;letter-spacing:0.2px;width:600px;text-align:center;">59,20</div>
<div class="t" style="left:512.65px;top:613.80px;width:80px;text-align:right;font-size:13.4px;line-height:13.4px;color:#555;transform-origin:100% 0;transform:rotate(-30deg);">23 - 24</div>
<div class="r" style="left:621.40px;top:423.52px;width:35.50px;height:184.28px;background:#3c74b6;"></div>
<div class="t" style="left:339.25px;top:405.55px;font-size:12.6px;line-height:12.6px;color:#3a3a3a;letter-spacing:0.2px;width:600px;text-align:center;">60,82</div>
<div class="t" style="left:556.65px;top:613.80px;width:80px;text-align:right;font-size:13.4px;line-height:13.4px;color:#555;transform-origin:100% 0;transform:rotate(-30deg);">24 - 25</div>
<div class="r" style="left:665.10px;top:418.73px;width:35.50px;height:189.07px;background:#3c74b6;"></div>
<div class="t" style="left:382.95px;top:400.76px;font-size:12.6px;line-height:12.6px;color:#3a3a3a;letter-spacing:0.2px;width:600px;text-align:center;">62,40</div>
<div class="t" style="left:600.35px;top:613.80px;width:80px;text-align:right;font-size:13.4px;line-height:13.4px;color:#555;transform-origin:100% 0;transform:rotate(-30deg);">25 - 26</div>
<div class="r" style="left:709.00px;top:407.52px;width:35.50px;height:200.28px;background:#3c74b6;"></div>
<div class="t" style="left:426.85px;top:389.55px;font-size:12.6px;line-height:12.6px;color:#3a3a3a;letter-spacing:0.2px;width:600px;text-align:center;">66,10</div>
<div class="t" style="left:644.25px;top:613.80px;width:80px;text-align:right;font-size:13.4px;line-height:13.4px;color:#555;transform-origin:100% 0;transform:rotate(-30deg);">26 - 27</div>
<div class="r" style="left:763.30px;top:342.00px;width:461.00px;height:310.50px;background:#ffffff;border-radius:12px;box-sizing:border-box;border:1px solid #e6e6e6;"></div>
<div class="t" style="left:794.80px;top:354.72px;font-size:13.2px;line-height:13.2px;color:#3b4d72;-webkit-text-stroke:0.41px #3b4d72;letter-spacing:-0.08px;">Cálcio (Ca)</div>
<div class="t" style="left:594.92px;top:354.72px;font-size:13.2px;line-height:13.2px;color:#3b4d72;-webkit-text-stroke:0.41px #3b4d72;letter-spacing:0.02px;width:600px;text-align:right;">Média: 3,28</div>
<div class="r" style="left:778.90px;top:376.90px;width:431.40px;height:1.00px;background:#e8e8e8;"></div>
<div class="r" style="left:804.50px;top:578.45px;width:418.80px;height:1.00px;background:#efefef;"></div>
<div class="r" style="left:799.50px;top:578.45px;width:4.00px;height:1.00px;background:#dddddd;"></div>
<div class="t" style="left:194.00px;top:572.99px;font-size:12px;line-height:12px;color:#555555;letter-spacing:0.3px;width:600px;text-align:right;">0,50</div>
<div class="r" style="left:804.50px;top:549.70px;width:418.80px;height:1.00px;background:#efefef;"></div>
<div class="r" style="left:799.50px;top:549.70px;width:4.00px;height:1.00px;background:#dddddd;"></div>
<div class="t" style="left:194.00px;top:544.24px;font-size:12px;line-height:12px;color:#555555;letter-spacing:0.3px;width:600px;text-align:right;">1,00</div>
<div class="r" style="left:804.50px;top:520.95px;width:418.80px;height:1.00px;background:#efefef;"></div>
<div class="r" style="left:799.50px;top:520.95px;width:4.00px;height:1.00px;background:#dddddd;"></div>
<div class="t" style="left:194.00px;top:515.49px;font-size:12px;line-height:12px;color:#555555;letter-spacing:0.3px;width:600px;text-align:right;">1,50</div>
<div class="r" style="left:804.50px;top:492.20px;width:418.80px;height:1.00px;background:#efefef;"></div>
<div class="r" style="left:799.50px;top:492.20px;width:4.00px;height:1.00px;background:#dddddd;"></div>
<div class="t" style="left:194.00px;top:486.74px;font-size:12px;line-height:12px;color:#555555;letter-spacing:0.3px;width:600px;text-align:right;">2,00</div>
<div class="r" style="left:804.50px;top:463.45px;width:418.80px;height:1.00px;background:#efefef;"></div>
<div class="r" style="left:799.50px;top:463.45px;width:4.00px;height:1.00px;background:#dddddd;"></div>
<div class="t" style="left:194.00px;top:457.99px;font-size:12px;line-height:12px;color:#555555;letter-spacing:0.3px;width:600px;text-align:right;">2,50</div>
<div class="r" style="left:804.50px;top:434.70px;width:418.80px;height:1.00px;background:#efefef;"></div>
<div class="r" style="left:799.50px;top:434.70px;width:4.00px;height:1.00px;background:#dddddd;"></div>
<div class="t" style="left:194.00px;top:429.24px;font-size:12px;line-height:12px;color:#555555;letter-spacing:0.3px;width:600px;text-align:right;">3,00</div>
<div class="r" style="left:804.50px;top:405.95px;width:418.80px;height:1.00px;background:#efefef;"></div>
<div class="r" style="left:799.50px;top:405.95px;width:4.00px;height:1.00px;background:#dddddd;"></div>
<div class="t" style="left:194.00px;top:400.49px;font-size:12px;line-height:12px;color:#555555;letter-spacing:0.3px;width:600px;text-align:right;">3,50</div>
<div class="r" style="left:803.00px;top:383.50px;width:1.00px;height:224.20px;background:#dcdcdc;"></div>
<div class="r" style="left:803.00px;top:607.70px;width:419.80px;height:1.00px;background:#dcdcdc;"></div>
<div class="r" style="left:820.00px;top:498.26px;width:36.30px;height:109.44px;background:#3c74b6;"></div>
<div class="t" style="left:538.25px;top:480.29px;font-size:12.6px;line-height:12.6px;color:#3a3a3a;letter-spacing:0.2px;width:600px;text-align:center;">1,91</div>
<div class="t" style="left:755.65px;top:613.70px;width:80px;text-align:right;font-size:13.4px;line-height:13.4px;color:#555;transform-origin:100% 0;transform:rotate(-30deg);">18 - 19</div>
<div class="r" style="left:864.10px;top:497.68px;width:36.30px;height:110.02px;background:#3c74b6;"></div>
<div class="t" style="left:582.35px;top:479.72px;font-size:12.6px;line-height:12.6px;color:#3a3a3a;letter-spacing:0.2px;width:600px;text-align:center;">1,92</div>
<div class="t" style="left:799.75px;top:613.70px;width:80px;text-align:right;font-size:13.4px;line-height:13.4px;color:#555;transform-origin:100% 0;transform:rotate(-30deg);">19 - 20</div>
<div class="r" style="left:909.10px;top:437.52px;width:36.30px;height:170.18px;background:#3c74b6;"></div>
<div class="t" style="left:627.35px;top:419.55px;font-size:12.6px;line-height:12.6px;color:#3a3a3a;letter-spacing:0.2px;width:600px;text-align:center;">2,97</div>
<div class="t" style="left:844.75px;top:613.70px;width:80px;text-align:right;font-size:13.4px;line-height:13.4px;color:#555;transform-origin:100% 0;transform:rotate(-30deg);">20 - 21</div>
<div class="r" style="left:952.50px;top:425.49px;width:36.30px;height:182.21px;background:#3c74b6;"></div>
<div class="t" style="left:670.75px;top:407.52px;font-size:12.6px;line-height:12.6px;color:#3a3a3a;letter-spacing:0.2px;width:600px;text-align:center;">3,18</div>
<div class="t" style="left:888.15px;top:613.70px;width:80px;text-align:right;font-size:13.4px;line-height:13.4px;color:#555;transform-origin:100% 0;transform:rotate(-30deg);">21 - 22</div>
<div class="r" style="left:998.10px;top:430.64px;width:36.30px;height:177.06px;background:#3c74b6;"></div>
<div class="t" style="left:716.35px;top:412.67px;font-size:12.6px;line-height:12.6px;color:#3a3a3a;letter-spacing:0.2px;width:600px;text-align:center;">3,09</div>
<div class="t" style="left:933.75px;top:613.70px;width:80px;text-align:right;font-size:13.4px;line-height:13.4px;color:#555;transform-origin:100% 0;transform:rotate(-30deg);">22 - 23</div>
<div class="r" style="left:1041.70px;top:419.18px;width:36.30px;height:188.52px;background:#3c74b6;"></div>
<div class="t" style="left:759.95px;top:401.21px;font-size:12.6px;line-height:12.6px;color:#3a3a3a;letter-spacing:0.2px;width:600px;text-align:center;">3,29</div>
<div class="t" style="left:977.35px;top:613.70px;width:80px;text-align:right;font-size:13.4px;line-height:13.4px;color:#555;transform-origin:100% 0;transform:rotate(-30deg);">23 - 24</div>
<div class="r" style="left:1086.90px;top:405.43px;width:36.30px;height:202.27px;background:#3c74b6;"></div>
<div class="t" style="left:805.15px;top:387.46px;font-size:12.6px;line-height:12.6px;color:#3a3a3a;letter-spacing:0.2px;width:600px;text-align:center;">3,53</div>
<div class="t" style="left:1022.55px;top:613.70px;width:80px;text-align:right;font-size:13.4px;line-height:13.4px;color:#555;transform-origin:100% 0;transform:rotate(-30deg);">24 - 25</div>
<div class="r" style="left:1130.80px;top:405.43px;width:36.30px;height:202.27px;background:#3c74b6;"></div>
<div class="t" style="left:849.05px;top:387.46px;font-size:12.6px;line-height:12.6px;color:#3a3a3a;letter-spacing:0.2px;width:600px;text-align:center;">3,53</div>
<div class="t" style="left:1066.45px;top:613.70px;width:80px;text-align:right;font-size:13.4px;line-height:13.4px;color:#555;transform-origin:100% 0;transform:rotate(-30deg);">25 - 26</div>
<div class="r" style="left:1175.60px;top:424.34px;width:36.30px;height:183.36px;background:#3c74b6;"></div>
<div class="t" style="left:893.85px;top:406.37px;font-size:12.6px;line-height:12.6px;color:#3a3a3a;letter-spacing:0.2px;width:600px;text-align:center;">3,20</div>
<div class="t" style="left:1111.25px;top:613.70px;width:80px;text-align:right;font-size:13.4px;line-height:13.4px;color:#555;transform-origin:100% 0;transform:rotate(-30deg);">26 - 27</div>
<div class="r" style="left:1231.50px;top:342.00px;width:460.90px;height:310.50px;background:#ffffff;border-radius:12px;box-sizing:border-box;border:1px solid #e6e6e6;"></div>
<div class="t" style="left:1262.80px;top:354.72px;font-size:13.2px;line-height:13.2px;color:#3b4d72;-webkit-text-stroke:0.41px #3b4d72;letter-spacing:-0.08px;">Capacidade de Troca de Cations (CTC)</div>
<div class="t" style="left:1063.62px;top:354.72px;font-size:13.2px;line-height:13.2px;color:#3b4d72;-webkit-text-stroke:0.41px #3b4d72;letter-spacing:0.02px;width:600px;text-align:right;">Média: 9,06</div>
<div class="r" style="left:1246.90px;top:376.90px;width:431.50px;height:1.00px;background:#e8e8e8;"></div>
<div class="r" style="left:1278.50px;top:571.60px;width:412.90px;height:1.00px;background:#efefef;"></div>
<div class="r" style="left:1273.50px;top:571.60px;width:4.00px;height:1.00px;background:#dddddd;"></div>
<div class="t" style="left:669.10px;top:566.14px;font-size:12px;line-height:12px;color:#555555;letter-spacing:0.3px;width:600px;text-align:right;">2,00</div>
<div class="r" style="left:1278.50px;top:535.90px;width:412.90px;height:1.00px;background:#efefef;"></div>
<div class="r" style="left:1273.50px;top:535.90px;width:4.00px;height:1.00px;background:#dddddd;"></div>
<div class="t" style="left:669.10px;top:530.44px;font-size:12px;line-height:12px;color:#555555;letter-spacing:0.3px;width:600px;text-align:right;">4,00</div>
<div class="r" style="left:1278.50px;top:500.20px;width:412.90px;height:1.00px;background:#efefef;"></div>
<div class="r" style="left:1273.50px;top:500.20px;width:4.00px;height:1.00px;background:#dddddd;"></div>
<div class="t" style="left:669.10px;top:494.74px;font-size:12px;line-height:12px;color:#555555;letter-spacing:0.3px;width:600px;text-align:right;">6,00</div>
<div class="r" style="left:1278.50px;top:464.50px;width:412.90px;height:1.00px;background:#efefef;"></div>
<div class="r" style="left:1273.50px;top:464.50px;width:4.00px;height:1.00px;background:#dddddd;"></div>
<div class="t" style="left:669.10px;top:459.04px;font-size:12px;line-height:12px;color:#555555;letter-spacing:0.3px;width:600px;text-align:right;">8,00</div>
<div class="r" style="left:1278.50px;top:428.80px;width:412.90px;height:1.00px;background:#efefef;"></div>
<div class="r" style="left:1273.50px;top:428.80px;width:4.00px;height:1.00px;background:#dddddd;"></div>
<div class="t" style="left:669.10px;top:423.34px;font-size:12px;line-height:12px;color:#555555;letter-spacing:0.3px;width:600px;text-align:right;">10,00</div>
<div class="r" style="left:1277.00px;top:383.50px;width:1.00px;height:224.30px;background:#dcdcdc;"></div>
<div class="r" style="left:1277.00px;top:607.80px;width:413.90px;height:1.00px;background:#dcdcdc;"></div>
<div class="r" style="left:1298.20px;top:461.66px;width:44.60px;height:146.14px;background:#3c74b6;"></div>
<div class="t" style="left:1020.60px;top:443.69px;font-size:12.6px;line-height:12.6px;color:#3a3a3a;letter-spacing:0.2px;width:600px;text-align:center;">8,28</div>
<div class="t" style="left:1238.00px;top:613.80px;width:80px;text-align:right;font-size:13.4px;line-height:13.4px;color:#555;transform-origin:100% 0;transform:rotate(-30deg);">20 - 21</div>
<div class="r" style="left:1352.90px;top:461.30px;width:44.60px;height:146.50px;background:#3c74b6;"></div>
<div class="t" style="left:1075.30px;top:443.34px;font-size:12.6px;line-height:12.6px;color:#3a3a3a;letter-spacing:0.2px;width:600px;text-align:center;">8,30</div>
<div class="t" style="left:1292.70px;top:613.80px;width:80px;text-align:right;font-size:13.4px;line-height:13.4px;color:#555;transform-origin:100% 0;transform:rotate(-30deg);">21 - 22</div>
<div class="r" style="left:1408.60px;top:408.71px;width:44.60px;height:199.09px;background:#3c74b6;"></div>
<div class="t" style="left:1131.00px;top:390.74px;font-size:12.6px;line-height:12.6px;color:#3a3a3a;letter-spacing:0.2px;width:600px;text-align:center;">11,28</div>
<div class="t" style="left:1348.40px;top:613.80px;width:80px;text-align:right;font-size:13.4px;line-height:13.4px;color:#555;transform-origin:100% 0;transform:rotate(-30deg);">22 - 23</div>
<div class="r" style="left:1464.20px;top:454.95px;width:44.60px;height:152.85px;background:#3c74b6;"></div>
<div class="t" style="left:1186.60px;top:436.98px;font-size:12.6px;line-height:12.6px;color:#3a3a3a;letter-spacing:0.2px;width:600px;text-align:center;">8,66</div>
<div class="t" style="left:1404.00px;top:613.80px;width:80px;text-align:right;font-size:13.4px;line-height:13.4px;color:#555;transform-origin:100% 0;transform:rotate(-30deg);">23 - 24</div>
<div class="r" style="left:1518.70px;top:452.66px;width:44.60px;height:155.14px;background:#3c74b6;"></div>
<div class="t" style="left:1241.10px;top:434.69px;font-size:12.6px;line-height:12.6px;color:#3a3a3a;letter-spacing:0.2px;width:600px;text-align:center;">8,79</div>
<div class="t" style="left:1458.50px;top:613.80px;width:80px;text-align:right;font-size:13.4px;line-height:13.4px;color:#555;transform-origin:100% 0;transform:rotate(-30deg);">24 - 25</div>
<div class="r" style="left:1574.50px;top:460.60px;width:44.60px;height:147.20px;background:#3c74b6;"></div>
<div class="t" style="left:1296.90px;top:442.63px;font-size:12.6px;line-height:12.6px;color:#3a3a3a;letter-spacing:0.2px;width:600px;text-align:center;">8,34</div>
<div class="t" style="left:1514.30px;top:613.80px;width:80px;text-align:right;font-size:13.4px;line-height:13.4px;color:#555;transform-origin:100% 0;transform:rotate(-30deg);">25 - 26</div>
<div class="r" style="left:1627.80px;top:479.84px;width:44.60px;height:127.96px;background:#3c74b6;"></div>
<div class="t" style="left:1350.20px;top:461.87px;font-size:12.6px;line-height:12.6px;color:#3a3a3a;letter-spacing:0.2px;width:600px;text-align:center;">7,25</div>
<div class="t" style="left:1567.60px;top:613.80px;width:80px;text-align:right;font-size:13.4px;line-height:13.4px;color:#555;transform-origin:100% 0;transform:rotate(-30deg);">26 - 27</div>
<div class="r" style="left:1698.50px;top:342.00px;width:461.50px;height:310.50px;background:#ffffff;border-radius:12px;box-sizing:border-box;border:1px solid #e6e6e6;"></div>
<div class="t" style="left:1731.40px;top:354.72px;font-size:13.2px;line-height:13.2px;color:#3b4d72;-webkit-text-stroke:0.41px #3b4d72;letter-spacing:-0.08px;">pH em Água (pH Água)</div>
<div class="r" style="left:1715.90px;top:376.90px;width:384.10px;height:1.00px;background:#e8e8e8;"></div>
<div class="r" style="left:1741.60px;top:577.00px;width:417.40px;height:1.00px;background:#efefef;"></div>
<div class="r" style="left:1736.60px;top:577.00px;width:4.00px;height:1.00px;background:#dddddd;"></div>
<div class="t" style="left:1131.50px;top:571.54px;font-size:12px;line-height:12px;color:#555555;letter-spacing:0.3px;width:600px;text-align:right;">1,00</div>
<div class="r" style="left:1741.60px;top:546.70px;width:417.40px;height:1.00px;background:#efefef;"></div>
<div class="r" style="left:1736.60px;top:546.70px;width:4.00px;height:1.00px;background:#dddddd;"></div>
<div class="t" style="left:1131.50px;top:541.24px;font-size:12px;line-height:12px;color:#555555;letter-spacing:0.3px;width:600px;text-align:right;">2,00</div>
<div class="r" style="left:1741.60px;top:516.40px;width:417.40px;height:1.00px;background:#efefef;"></div>
<div class="r" style="left:1736.60px;top:516.40px;width:4.00px;height:1.00px;background:#dddddd;"></div>
<div class="t" style="left:1131.50px;top:510.94px;font-size:12px;line-height:12px;color:#555555;letter-spacing:0.3px;width:600px;text-align:right;">3,00</div>
<div class="r" style="left:1741.60px;top:486.10px;width:417.40px;height:1.00px;background:#efefef;"></div>
<div class="r" style="left:1736.60px;top:486.10px;width:4.00px;height:1.00px;background:#dddddd;"></div>
<div class="t" style="left:1131.50px;top:480.64px;font-size:12px;line-height:12px;color:#555555;letter-spacing:0.3px;width:600px;text-align:right;">4,00</div>
<div class="r" style="left:1741.60px;top:455.80px;width:417.40px;height:1.00px;background:#efefef;"></div>
<div class="r" style="left:1736.60px;top:455.80px;width:4.00px;height:1.00px;background:#dddddd;"></div>
<div class="t" style="left:1131.50px;top:450.34px;font-size:12px;line-height:12px;color:#555555;letter-spacing:0.3px;width:600px;text-align:right;">5,00</div>
<div class="r" style="left:1741.60px;top:425.50px;width:417.40px;height:1.00px;background:#efefef;"></div>
<div class="r" style="left:1736.60px;top:425.50px;width:4.00px;height:1.00px;background:#dddddd;"></div>
<div class="t" style="left:1131.50px;top:420.04px;font-size:12px;line-height:12px;color:#555555;letter-spacing:0.3px;width:600px;text-align:right;">6,00</div>
<div class="r" style="left:1740.10px;top:383.50px;width:1.00px;height:224.30px;background:#dcdcdc;"></div>
<div class="r" style="left:1740.10px;top:607.80px;width:418.40px;height:1.00px;background:#dcdcdc;"></div>
<div class="r" style="left:1756.40px;top:435.06px;width:36.50px;height:172.74px;background:#3c74b6;"></div>
<div class="t" style="left:1474.75px;top:417.09px;font-size:12.6px;line-height:12.6px;color:#3a3a3a;letter-spacing:0.2px;width:600px;text-align:center;">5,72</div>
<div class="t" style="left:1692.15px;top:613.80px;width:80px;text-align:right;font-size:13.4px;line-height:13.4px;color:#555;transform-origin:100% 0;transform:rotate(-30deg);">18 - 19</div>
<div class="r" style="left:1800.30px;top:434.15px;width:36.50px;height:173.65px;background:#3c74b6;"></div>
<div class="t" style="left:1518.65px;top:416.18px;font-size:12.6px;line-height:12.6px;color:#3a3a3a;letter-spacing:0.2px;width:600px;text-align:center;">5,75</div>
<div class="t" style="left:1736.05px;top:613.80px;width:80px;text-align:right;font-size:13.4px;line-height:13.4px;color:#555;transform-origin:100% 0;transform:rotate(-30deg);">19 - 20</div>
<div class="r" style="left:1845.10px;top:428.11px;width:36.50px;height:179.69px;background:#3c74b6;"></div>
<div class="t" style="left:1563.45px;top:410.14px;font-size:12.6px;line-height:12.6px;color:#3a3a3a;letter-spacing:0.2px;width:600px;text-align:center;">5,95</div>
<div class="t" style="left:1780.85px;top:613.80px;width:80px;text-align:right;font-size:13.4px;line-height:13.4px;color:#555;transform-origin:100% 0;transform:rotate(-30deg);">20 - 21</div>
<div class="r" style="left:1889.10px;top:424.18px;width:36.50px;height:183.62px;background:#3c74b6;"></div>
<div class="t" style="left:1607.45px;top:406.22px;font-size:12.6px;line-height:12.6px;color:#3a3a3a;letter-spacing:0.2px;width:600px;text-align:center;">6,08</div>
<div class="t" style="left:1824.85px;top:613.80px;width:80px;text-align:right;font-size:13.4px;line-height:13.4px;color:#555;transform-origin:100% 0;transform:rotate(-30deg);">21 - 22</div>
<div class="r" style="left:1934.20px;top:427.20px;width:36.50px;height:180.60px;background:#3c74b6;"></div>
<div class="t" style="left:1652.55px;top:409.24px;font-size:12.6px;line-height:12.6px;color:#3a3a3a;letter-spacing:0.2px;width:600px;text-align:center;">5,98</div>
<div class="t" style="left:1869.95px;top:613.80px;width:80px;text-align:right;font-size:13.4px;line-height:13.4px;color:#555;transform-origin:100% 0;transform:rotate(-30deg);">22 - 23</div>
<div class="r" style="left:299.00px;top:659.50px;width:456.50px;height:315.10px;background:#ffffff;border-radius:9px 12px 12px 9px;box-sizing:border-box;border:1px solid #e6e6e6;"></div>
<div class="t" style="left:326.10px;top:672.92px;font-size:13.2px;line-height:13.2px;color:#3b4d72;-webkit-text-stroke:0.41px #3b4d72;letter-spacing:-0.08px;">Magnésio (Mg)</div>
<div class="t" style="left:126.02px;top:672.92px;font-size:13.2px;line-height:13.2px;color:#3b4d72;-webkit-text-stroke:0.41px #3b4d72;letter-spacing:0.02px;width:600px;text-align:right;">Média: 1,36</div>
<div class="r" style="left:311.10px;top:695.60px;width:429.80px;height:1.00px;background:#e8e8e8;"></div>
<div class="r" style="left:333.10px;top:908.88px;width:421.40px;height:1.00px;background:#efefef;"></div>
<div class="r" style="left:328.10px;top:908.88px;width:4.00px;height:1.00px;background:#dddddd;"></div>
<div class="t" style="left:-276.00px;top:903.42px;font-size:12px;line-height:12px;color:#555555;letter-spacing:0.3px;width:600px;text-align:right;">0,20</div>
<div class="r" style="left:333.10px;top:885.06px;width:421.40px;height:1.00px;background:#efefef;"></div>
<div class="r" style="left:328.10px;top:885.06px;width:4.00px;height:1.00px;background:#dddddd;"></div>
<div class="t" style="left:-276.00px;top:879.60px;font-size:12px;line-height:12px;color:#555555;letter-spacing:0.3px;width:600px;text-align:right;">0,40</div>
<div class="r" style="left:333.10px;top:861.24px;width:421.40px;height:1.00px;background:#efefef;"></div>
<div class="r" style="left:328.10px;top:861.24px;width:4.00px;height:1.00px;background:#dddddd;"></div>
<div class="t" style="left:-276.00px;top:855.78px;font-size:12px;line-height:12px;color:#555555;letter-spacing:0.3px;width:600px;text-align:right;">0,60</div>
<div class="r" style="left:333.10px;top:837.42px;width:421.40px;height:1.00px;background:#efefef;"></div>
<div class="r" style="left:328.10px;top:837.42px;width:4.00px;height:1.00px;background:#dddddd;"></div>
<div class="t" style="left:-276.00px;top:831.96px;font-size:12px;line-height:12px;color:#555555;letter-spacing:0.3px;width:600px;text-align:right;">0,80</div>
<div class="r" style="left:333.10px;top:813.60px;width:421.40px;height:1.00px;background:#efefef;"></div>
<div class="r" style="left:328.10px;top:813.60px;width:4.00px;height:1.00px;background:#dddddd;"></div>
<div class="t" style="left:-276.00px;top:808.14px;font-size:12px;line-height:12px;color:#555555;letter-spacing:0.3px;width:600px;text-align:right;">1,00</div>
<div class="r" style="left:333.10px;top:789.78px;width:421.40px;height:1.00px;background:#efefef;"></div>
<div class="r" style="left:328.10px;top:789.78px;width:4.00px;height:1.00px;background:#dddddd;"></div>
<div class="t" style="left:-276.00px;top:784.32px;font-size:12px;line-height:12px;color:#555555;letter-spacing:0.3px;width:600px;text-align:right;">1,20</div>
<div class="r" style="left:333.10px;top:765.96px;width:421.40px;height:1.00px;background:#efefef;"></div>
<div class="r" style="left:328.10px;top:765.96px;width:4.00px;height:1.00px;background:#dddddd;"></div>
<div class="t" style="left:-276.00px;top:760.50px;font-size:12px;line-height:12px;color:#555555;letter-spacing:0.3px;width:600px;text-align:right;">1,40</div>
<div class="r" style="left:333.10px;top:742.14px;width:421.40px;height:1.00px;background:#efefef;"></div>
<div class="r" style="left:328.10px;top:742.14px;width:4.00px;height:1.00px;background:#dddddd;"></div>
<div class="t" style="left:-276.00px;top:736.68px;font-size:12px;line-height:12px;color:#555555;letter-spacing:0.3px;width:600px;text-align:right;">1,60</div>
<div class="r" style="left:331.60px;top:708.30px;width:1.00px;height:224.90px;background:#dcdcdc;"></div>
<div class="r" style="left:331.60px;top:933.20px;width:422.40px;height:1.00px;background:#dcdcdc;"></div>
<div class="r" style="left:348.60px;top:861.40px;width:36.50px;height:71.80px;background:#3c74b6;"></div>
<div class="t" style="left:66.95px;top:843.43px;font-size:12.6px;line-height:12.6px;color:#3a3a3a;letter-spacing:0.2px;width:600px;text-align:center;">0,61</div>
<div class="t" style="left:284.35px;top:939.20px;width:80px;text-align:right;font-size:13.4px;line-height:13.4px;color:#555;transform-origin:100% 0;transform:rotate(-30deg);">18 - 19</div>
<div class="r" style="left:392.60px;top:855.52px;width:36.50px;height:77.68px;background:#3c74b6;"></div>
<div class="t" style="left:110.95px;top:837.55px;font-size:12.6px;line-height:12.6px;color:#3a3a3a;letter-spacing:0.2px;width:600px;text-align:center;">0,66</div>
<div class="t" style="left:328.35px;top:939.20px;width:80px;text-align:right;font-size:13.4px;line-height:13.4px;color:#555;transform-origin:100% 0;transform:rotate(-30deg);">19 - 20</div>
<div class="r" style="left:437.70px;top:806.08px;width:36.50px;height:127.12px;background:#3c74b6;"></div>
<div class="t" style="left:156.05px;top:788.12px;font-size:12.6px;line-height:12.6px;color:#3a3a3a;letter-spacing:0.2px;width:600px;text-align:center;">1,08</div>
<div class="t" style="left:373.45px;top:939.20px;width:80px;text-align:right;font-size:13.4px;line-height:13.4px;color:#555;transform-origin:100% 0;transform:rotate(-30deg);">20 - 21</div>
<div class="r" style="left:481.30px;top:790.78px;width:36.50px;height:142.42px;background:#3c74b6;"></div>
<div class="t" style="left:199.65px;top:772.81px;font-size:12.6px;line-height:12.6px;color:#3a3a3a;letter-spacing:0.2px;width:600px;text-align:center;">1,21</div>
<div class="t" style="left:417.05px;top:939.20px;width:80px;text-align:right;font-size:13.4px;line-height:13.4px;color:#555;transform-origin:100% 0;transform:rotate(-30deg);">21 - 22</div>
<div class="r" style="left:526.60px;top:790.78px;width:36.50px;height:142.42px;background:#3c74b6;"></div>
<div class="t" style="left:244.95px;top:772.81px;font-size:12.6px;line-height:12.6px;color:#3a3a3a;letter-spacing:0.2px;width:600px;text-align:center;">1,21</div>
<div class="t" style="left:462.35px;top:939.20px;width:80px;text-align:right;font-size:13.4px;line-height:13.4px;color:#555;transform-origin:100% 0;transform:rotate(-30deg);">22 - 23</div>
<div class="r" style="left:570.10px;top:775.48px;width:36.50px;height:157.72px;background:#3c74b6;"></div>
<div class="t" style="left:288.45px;top:757.51px;font-size:12.6px;line-height:12.6px;color:#3a3a3a;letter-spacing:0.2px;width:600px;text-align:center;">1,34</div>
<div class="t" style="left:505.85px;top:939.20px;width:80px;text-align:right;font-size:13.4px;line-height:13.4px;color:#555;transform-origin:100% 0;transform:rotate(-30deg);">23 - 24</div>
<div class="r" style="left:615.20px;top:737.82px;width:36.50px;height:195.38px;background:#3c74b6;"></div>
<div class="t" style="left:333.55px;top:719.85px;font-size:12.6px;line-height:12.6px;color:#3a3a3a;letter-spacing:0.2px;width:600px;text-align:center;">1,66</div>
<div class="t" style="left:550.95px;top:939.20px;width:80px;text-align:right;font-size:13.4px;line-height:13.4px;color:#555;transform-origin:100% 0;transform:rotate(-30deg);">24 - 25</div>
<div class="r" style="left:659.00px;top:754.30px;width:36.50px;height:178.90px;background:#3c74b6;"></div>
<div class="t" style="left:377.35px;top:736.33px;font-size:12.6px;line-height:12.6px;color:#3a3a3a;letter-spacing:0.2px;width:600px;text-align:center;">1,52</div>
<div class="t" style="left:594.75px;top:939.20px;width:80px;text-align:right;font-size:13.4px;line-height:13.4px;color:#555;transform-origin:100% 0;transform:rotate(-30deg);">25 - 26</div>
<div class="r" style="left:704.10px;top:756.65px;width:36.50px;height:176.55px;background:#3c74b6;"></div>
<div class="t" style="left:422.45px;top:738.68px;font-size:12.6px;line-height:12.6px;color:#3a3a3a;letter-spacing:0.2px;width:600px;text-align:center;">1,50</div>
<div class="t" style="left:639.85px;top:939.20px;width:80px;text-align:right;font-size:13.4px;line-height:13.4px;color:#555;transform-origin:100% 0;transform:rotate(-30deg);">26 - 27</div>
<div class="r" style="left:766.60px;top:659.50px;width:459.90px;height:315.10px;background:#ffffff;border-radius:12px;box-sizing:border-box;border:1px solid #e6e6e6;"></div>
<div class="t" style="left:794.30px;top:672.92px;font-size:13.2px;line-height:13.2px;color:#3b4d72;-webkit-text-stroke:0.41px #3b4d72;letter-spacing:-0.08px;">Matéria Orgânica do Solo (MOS)</div>
<div class="t" style="left:594.62px;top:672.92px;font-size:13.2px;line-height:13.2px;color:#3b4d72;-webkit-text-stroke:0.41px #3b4d72;letter-spacing:0.02px;width:600px;text-align:right;">Média: 23,52</div>
<div class="r" style="left:778.90px;top:695.60px;width:431.10px;height:1.00px;background:#e8e8e8;"></div>
<div class="r" style="left:808.80px;top:902.30px;width:416.70px;height:1.00px;background:#efefef;"></div>
<div class="r" style="left:803.80px;top:902.30px;width:4.00px;height:1.00px;background:#dddddd;"></div>
<div class="t" style="left:199.80px;top:896.84px;font-size:12px;line-height:12px;color:#555555;letter-spacing:0.3px;width:600px;text-align:right;">4,00</div>
<div class="r" style="left:808.80px;top:871.90px;width:416.70px;height:1.00px;background:#efefef;"></div>
<div class="r" style="left:803.80px;top:871.90px;width:4.00px;height:1.00px;background:#dddddd;"></div>
<div class="t" style="left:199.80px;top:866.44px;font-size:12px;line-height:12px;color:#555555;letter-spacing:0.3px;width:600px;text-align:right;">8,00</div>
<div class="r" style="left:808.80px;top:841.50px;width:416.70px;height:1.00px;background:#efefef;"></div>
<div class="r" style="left:803.80px;top:841.50px;width:4.00px;height:1.00px;background:#dddddd;"></div>
<div class="t" style="left:199.80px;top:836.04px;font-size:12px;line-height:12px;color:#555555;letter-spacing:0.3px;width:600px;text-align:right;">12,00</div>
<div class="r" style="left:808.80px;top:811.10px;width:416.70px;height:1.00px;background:#efefef;"></div>
<div class="r" style="left:803.80px;top:811.10px;width:4.00px;height:1.00px;background:#dddddd;"></div>
<div class="t" style="left:199.80px;top:805.64px;font-size:12px;line-height:12px;color:#555555;letter-spacing:0.3px;width:600px;text-align:right;">16,00</div>
<div class="r" style="left:808.80px;top:780.70px;width:416.70px;height:1.00px;background:#efefef;"></div>
<div class="r" style="left:803.80px;top:780.70px;width:4.00px;height:1.00px;background:#dddddd;"></div>
<div class="t" style="left:199.80px;top:775.24px;font-size:12px;line-height:12px;color:#555555;letter-spacing:0.3px;width:600px;text-align:right;">20,00</div>
<div class="r" style="left:808.80px;top:750.30px;width:416.70px;height:1.00px;background:#efefef;"></div>
<div class="r" style="left:803.80px;top:750.30px;width:4.00px;height:1.00px;background:#dddddd;"></div>
<div class="t" style="left:199.80px;top:744.84px;font-size:12px;line-height:12px;color:#555555;letter-spacing:0.3px;width:600px;text-align:right;">24,00</div>
<div class="r" style="left:807.30px;top:708.30px;width:1.00px;height:224.90px;background:#dcdcdc;"></div>
<div class="r" style="left:807.30px;top:933.20px;width:417.70px;height:1.00px;background:#dcdcdc;"></div>
<div class="r" style="left:824.50px;top:794.33px;width:35.80px;height:138.87px;background:#3c74b6;"></div>
<div class="t" style="left:542.50px;top:776.37px;font-size:12.6px;line-height:12.6px;color:#3a3a3a;letter-spacing:0.2px;width:600px;text-align:center;">18,32</div>
<div class="t" style="left:759.90px;top:939.20px;width:80px;text-align:right;font-size:13.4px;line-height:13.4px;color:#555;transform-origin:100% 0;transform:rotate(-30deg);">18 - 19</div>
<div class="r" style="left:867.70px;top:765.68px;width:35.80px;height:167.52px;background:#3c74b6;"></div>
<div class="t" style="left:585.70px;top:747.71px;font-size:12.6px;line-height:12.6px;color:#3a3a3a;letter-spacing:0.2px;width:600px;text-align:center;">22,10</div>
<div class="t" style="left:803.10px;top:939.20px;width:80px;text-align:right;font-size:13.4px;line-height:13.4px;color:#555;transform-origin:100% 0;transform:rotate(-30deg);">19 - 20</div>
<div class="r" style="left:911.30px;top:760.22px;width:35.80px;height:172.98px;background:#3c74b6;"></div>
<div class="t" style="left:629.30px;top:742.26px;font-size:12.6px;line-height:12.6px;color:#3a3a3a;letter-spacing:0.2px;width:600px;text-align:center;">22,82</div>
<div class="t" style="left:846.70px;top:939.20px;width:80px;text-align:right;font-size:13.4px;line-height:13.4px;color:#555;transform-origin:100% 0;transform:rotate(-30deg);">20 - 21</div>
<div class="r" style="left:955.60px;top:762.65px;width:35.80px;height:170.55px;background:#3c74b6;"></div>
<div class="t" style="left:673.60px;top:744.68px;font-size:12.6px;line-height:12.6px;color:#3a3a3a;letter-spacing:0.2px;width:600px;text-align:center;">22,50</div>
<div class="t" style="left:891.00px;top:939.20px;width:80px;text-align:right;font-size:13.4px;line-height:13.4px;color:#555;transform-origin:100% 0;transform:rotate(-30deg);">21 - 22</div>
<div class="r" style="left:999.10px;top:761.89px;width:35.80px;height:171.31px;background:#3c74b6;"></div>
<div class="t" style="left:717.10px;top:743.92px;font-size:12.6px;line-height:12.6px;color:#3a3a3a;letter-spacing:0.2px;width:600px;text-align:center;">22,60</div>
<div class="t" style="left:934.50px;top:939.20px;width:80px;text-align:right;font-size:13.4px;line-height:13.4px;color:#555;transform-origin:100% 0;transform:rotate(-30deg);">22 - 23</div>
<div class="r" style="left:1042.10px;top:744.69px;width:35.80px;height:188.51px;background:#3c74b6;"></div>
<div class="t" style="left:760.10px;top:726.72px;font-size:12.6px;line-height:12.6px;color:#3a3a3a;letter-spacing:0.2px;width:600px;text-align:center;">24,87</div>
<div class="t" style="left:977.50px;top:939.20px;width:80px;text-align:right;font-size:13.4px;line-height:13.4px;color:#555;transform-origin:100% 0;transform:rotate(-30deg);">23 - 24</div>
<div class="r" style="left:1086.20px;top:748.93px;width:35.80px;height:184.27px;background:#3c74b6;"></div>
<div class="t" style="left:804.20px;top:730.96px;font-size:12.6px;line-height:12.6px;color:#3a3a3a;letter-spacing:0.2px;width:600px;text-align:center;">24,31</div>
<div class="t" style="left:1021.60px;top:939.20px;width:80px;text-align:right;font-size:13.4px;line-height:13.4px;color:#555;transform-origin:100% 0;transform:rotate(-30deg);">24 - 25</div>
<div class="r" style="left:1129.30px;top:750.22px;width:35.80px;height:182.98px;background:#3c74b6;"></div>
<div class="t" style="left:847.30px;top:732.25px;font-size:12.6px;line-height:12.6px;color:#3a3a3a;letter-spacing:0.2px;width:600px;text-align:center;">24,14</div>
<div class="t" style="left:1064.70px;top:939.20px;width:80px;text-align:right;font-size:13.4px;line-height:13.4px;color:#555;transform-origin:100% 0;transform:rotate(-30deg);">25 - 26</div>
<div class="r" style="left:1174.10px;top:775.31px;width:35.80px;height:157.89px;background:#3c74b6;"></div>
<div class="t" style="left:892.10px;top:757.34px;font-size:12.6px;line-height:12.6px;color:#3a3a3a;letter-spacing:0.2px;width:600px;text-align:center;">20,83</div>
<div class="t" style="left:1109.50px;top:939.20px;width:80px;text-align:right;font-size:13.4px;line-height:13.4px;color:#555;transform-origin:100% 0;transform:rotate(-30deg);">26 - 27</div>
<div class="r" style="left:1232.70px;top:659.50px;width:460.60px;height:315.10px;background:#ffffff;border-radius:12px;box-sizing:border-box;border:1px solid #e6e6e6;"></div>
<div class="t" style="left:1267.50px;top:672.92px;font-size:13.2px;line-height:13.2px;color:#3b4d72;-webkit-text-stroke:0.41px #3b4d72;letter-spacing:-0.08px;">Potássio (K)</div>
<div class="t" style="left:1069.22px;top:672.92px;font-size:13.2px;line-height:13.2px;color:#3b4d72;-webkit-text-stroke:0.41px #3b4d72;letter-spacing:0.02px;width:600px;text-align:right;">Média: 4,96</div>
<div class="r" style="left:1253.20px;top:695.60px;width:430.70px;height:1.00px;background:#e8e8e8;"></div>
<div class="r" style="left:1282.50px;top:908.70px;width:409.80px;height:1.00px;background:#efefef;"></div>
<div class="r" style="left:1277.50px;top:908.70px;width:4.00px;height:1.00px;background:#dddddd;"></div>
<div class="t" style="left:673.40px;top:903.24px;font-size:12px;line-height:12px;color:#555555;letter-spacing:0.3px;width:600px;text-align:right;">2,00</div>
<div class="r" style="left:1282.50px;top:884.90px;width:409.80px;height:1.00px;background:#efefef;"></div>
<div class="r" style="left:1277.50px;top:884.90px;width:4.00px;height:1.00px;background:#dddddd;"></div>
<div class="t" style="left:673.40px;top:879.44px;font-size:12px;line-height:12px;color:#555555;letter-spacing:0.3px;width:600px;text-align:right;">4,00</div>
<div class="r" style="left:1282.50px;top:861.10px;width:409.80px;height:1.00px;background:#efefef;"></div>
<div class="r" style="left:1277.50px;top:861.10px;width:4.00px;height:1.00px;background:#dddddd;"></div>
<div class="t" style="left:673.40px;top:855.64px;font-size:12px;line-height:12px;color:#555555;letter-spacing:0.3px;width:600px;text-align:right;">6,00</div>
<div class="r" style="left:1282.50px;top:837.30px;width:409.80px;height:1.00px;background:#efefef;"></div>
<div class="r" style="left:1277.50px;top:837.30px;width:4.00px;height:1.00px;background:#dddddd;"></div>
<div class="t" style="left:673.40px;top:831.84px;font-size:12px;line-height:12px;color:#555555;letter-spacing:0.3px;width:600px;text-align:right;">8,00</div>
<div class="r" style="left:1282.50px;top:813.50px;width:409.80px;height:1.00px;background:#efefef;"></div>
<div class="r" style="left:1277.50px;top:813.50px;width:4.00px;height:1.00px;background:#dddddd;"></div>
<div class="t" style="left:673.40px;top:808.04px;font-size:12px;line-height:12px;color:#555555;letter-spacing:0.3px;width:600px;text-align:right;">10,00</div>
<div class="r" style="left:1282.50px;top:789.70px;width:409.80px;height:1.00px;background:#efefef;"></div>
<div class="r" style="left:1277.50px;top:789.70px;width:4.00px;height:1.00px;background:#dddddd;"></div>
<div class="t" style="left:673.40px;top:784.24px;font-size:12px;line-height:12px;color:#555555;letter-spacing:0.3px;width:600px;text-align:right;">12,00</div>
<div class="r" style="left:1282.50px;top:765.90px;width:409.80px;height:1.00px;background:#efefef;"></div>
<div class="r" style="left:1277.50px;top:765.90px;width:4.00px;height:1.00px;background:#dddddd;"></div>
<div class="t" style="left:673.40px;top:760.44px;font-size:12px;line-height:12px;color:#555555;letter-spacing:0.3px;width:600px;text-align:right;">14,00</div>
<div class="r" style="left:1282.50px;top:742.10px;width:409.80px;height:1.00px;background:#efefef;"></div>
<div class="r" style="left:1277.50px;top:742.10px;width:4.00px;height:1.00px;background:#dddddd;"></div>
<div class="t" style="left:673.40px;top:736.64px;font-size:12px;line-height:12px;color:#555555;letter-spacing:0.3px;width:600px;text-align:right;">16,00</div>
<div class="r" style="left:1281.00px;top:708.30px;width:1.00px;height:224.70px;background:#dcdcdc;"></div>
<div class="r" style="left:1281.00px;top:933.00px;width:410.80px;height:1.00px;background:#dcdcdc;"></div>
<div class="r" style="left:1303.00px;top:911.81px;width:44.60px;height:21.19px;background:#3c74b6;"></div>
<div class="t" style="left:1025.40px;top:893.85px;font-size:12.6px;line-height:12.6px;color:#3a3a3a;letter-spacing:0.2px;width:600px;text-align:center;">1,80</div>
<div class="t" style="left:1242.80px;top:939.00px;width:80px;text-align:right;font-size:13.4px;line-height:13.4px;color:#555;transform-origin:100% 0;transform:rotate(-30deg);">20 - 21</div>
<div class="r" style="left:1357.60px;top:902.40px;width:44.60px;height:30.60px;background:#3c74b6;"></div>
<div class="t" style="left:1080.00px;top:884.43px;font-size:12.6px;line-height:12.6px;color:#3a3a3a;letter-spacing:0.2px;width:600px;text-align:center;">2,60</div>
<div class="t" style="left:1297.40px;top:939.00px;width:80px;text-align:right;font-size:13.4px;line-height:13.4px;color:#555;transform-origin:100% 0;transform:rotate(-30deg);">21 - 22</div>
<div class="r" style="left:1413.00px;top:928.41px;width:44.60px;height:4.59px;background:#3c74b6;"></div>
<div class="t" style="left:1135.40px;top:910.44px;font-size:12.6px;line-height:12.6px;color:#3a3a3a;letter-spacing:0.2px;width:600px;text-align:center;">0,39</div>
<div class="t" style="left:1352.80px;top:939.00px;width:80px;text-align:right;font-size:13.4px;line-height:13.4px;color:#555;transform-origin:100% 0;transform:rotate(-30deg);">22 - 23</div>
<div class="r" style="left:1468.50px;top:735.97px;width:44.60px;height:197.03px;background:#3c74b6;"></div>
<div class="t" style="left:1190.90px;top:718.00px;font-size:12.6px;line-height:12.6px;color:#3a3a3a;letter-spacing:0.2px;width:600px;text-align:center;">16,74</div>
<div class="t" style="left:1408.30px;top:939.00px;width:80px;text-align:right;font-size:13.4px;line-height:13.4px;color:#555;transform-origin:100% 0;transform:rotate(-30deg);">23 - 24</div>
<div class="r" style="left:1523.00px;top:864.38px;width:44.60px;height:68.62px;background:#3c74b6;"></div>
<div class="t" style="left:1245.40px;top:846.41px;font-size:12.6px;line-height:12.6px;color:#3a3a3a;letter-spacing:0.2px;width:600px;text-align:center;">5,83</div>
<div class="t" style="left:1462.80px;top:939.00px;width:80px;text-align:right;font-size:13.4px;line-height:13.4px;color:#555;transform-origin:100% 0;transform:rotate(-30deg);">24 - 25</div>
<div class="r" style="left:1578.20px;top:930.88px;width:44.60px;height:2.12px;background:#3c74b6;"></div>
<div class="t" style="left:1300.60px;top:912.91px;font-size:12.6px;line-height:12.6px;color:#3a3a3a;letter-spacing:0.2px;width:600px;text-align:center;">0,18</div>
<div class="t" style="left:1518.00px;top:939.00px;width:80px;text-align:right;font-size:13.4px;line-height:13.4px;color:#555;transform-origin:100% 0;transform:rotate(-30deg);">25 - 26</div>
<div class="r" style="left:1632.30px;top:931.71px;width:44.60px;height:1.29px;background:#3c74b6;"></div>
<div class="t" style="left:1354.70px;top:913.74px;font-size:12.6px;line-height:12.6px;color:#3a3a3a;letter-spacing:0.2px;width:600px;text-align:center;">0,11</div>
<div class="t" style="left:1572.10px;top:939.00px;width:80px;text-align:right;font-size:13.4px;line-height:13.4px;color:#555;transform-origin:100% 0;transform:rotate(-30deg);">26 - 27</div>
<div class="r" style="left:1701.50px;top:659.50px;width:458.50px;height:315.10px;background:#ffffff;border-radius:12px;box-sizing:border-box;border:1px solid #e6e6e6;"></div>
<div class="t" style="left:1731.50px;top:675.22px;font-size:13.2px;line-height:13.2px;color:#3b4d72;-webkit-text-stroke:0.41px #3b4d72;letter-spacing:-0.08px;">Fósforo Resina (P Resina)</div>
<div class="r" style="left:1716.60px;top:697.90px;width:383.40px;height:1.00px;background:#e8e8e8;"></div>
<div class="r" style="left:1747.50px;top:907.25px;width:411.50px;height:1.00px;background:#efefef;"></div>
<div class="r" style="left:1742.50px;top:907.25px;width:4.00px;height:1.00px;background:#dddddd;"></div>
<div class="t" style="left:1137.20px;top:901.79px;font-size:12px;line-height:12px;color:#555555;letter-spacing:0.3px;width:600px;text-align:right;">5,00</div>
<div class="r" style="left:1747.50px;top:881.80px;width:411.50px;height:1.00px;background:#efefef;"></div>
<div class="r" style="left:1742.50px;top:881.80px;width:4.00px;height:1.00px;background:#dddddd;"></div>
<div class="t" style="left:1137.20px;top:876.34px;font-size:12px;line-height:12px;color:#555555;letter-spacing:0.3px;width:600px;text-align:right;">10,00</div>
<div class="r" style="left:1747.50px;top:856.35px;width:411.50px;height:1.00px;background:#efefef;"></div>
<div class="r" style="left:1742.50px;top:856.35px;width:4.00px;height:1.00px;background:#dddddd;"></div>
<div class="t" style="left:1137.20px;top:850.89px;font-size:12px;line-height:12px;color:#555555;letter-spacing:0.3px;width:600px;text-align:right;">15,00</div>
<div class="r" style="left:1747.50px;top:830.90px;width:411.50px;height:1.00px;background:#efefef;"></div>
<div class="r" style="left:1742.50px;top:830.90px;width:4.00px;height:1.00px;background:#dddddd;"></div>
<div class="t" style="left:1137.20px;top:825.44px;font-size:12px;line-height:12px;color:#555555;letter-spacing:0.3px;width:600px;text-align:right;">20,00</div>
<div class="r" style="left:1747.50px;top:805.45px;width:411.50px;height:1.00px;background:#efefef;"></div>
<div class="r" style="left:1742.50px;top:805.45px;width:4.00px;height:1.00px;background:#dddddd;"></div>
<div class="t" style="left:1137.20px;top:799.99px;font-size:12px;line-height:12px;color:#555555;letter-spacing:0.3px;width:600px;text-align:right;">25,00</div>
<div class="r" style="left:1747.50px;top:780.00px;width:411.50px;height:1.00px;background:#efefef;"></div>
<div class="r" style="left:1742.50px;top:780.00px;width:4.00px;height:1.00px;background:#dddddd;"></div>
<div class="t" style="left:1137.20px;top:774.54px;font-size:12px;line-height:12px;color:#555555;letter-spacing:0.3px;width:600px;text-align:right;">30,00</div>
<div class="r" style="left:1747.50px;top:754.55px;width:411.50px;height:1.00px;background:#efefef;"></div>
<div class="r" style="left:1742.50px;top:754.55px;width:4.00px;height:1.00px;background:#dddddd;"></div>
<div class="t" style="left:1137.20px;top:749.09px;font-size:12px;line-height:12px;color:#555555;letter-spacing:0.3px;width:600px;text-align:right;">35,00</div>
<div class="r" style="left:1747.50px;top:729.10px;width:411.50px;height:1.00px;background:#efefef;"></div>
<div class="r" style="left:1742.50px;top:729.10px;width:4.00px;height:1.00px;background:#dddddd;"></div>
<div class="t" style="left:1137.20px;top:723.64px;font-size:12px;line-height:12px;color:#555555;letter-spacing:0.3px;width:600px;text-align:right;">40,00</div>
<div class="r" style="left:1746.00px;top:708.00px;width:1.00px;height:225.20px;background:#dcdcdc;"></div>
<div class="r" style="left:1746.00px;top:933.20px;width:412.50px;height:1.00px;background:#dcdcdc;"></div>
<div class="r" style="left:1773.40px;top:927.00px;width:44.80px;height:6.20px;background:#3c74b6;"></div>
<div class="t" style="left:1495.90px;top:909.03px;font-size:12.6px;line-height:12.6px;color:#3a3a3a;letter-spacing:0.2px;width:600px;text-align:center;">1,23</div>
<div class="t" style="left:1713.30px;top:939.20px;width:80px;text-align:right;font-size:13.4px;line-height:13.4px;color:#555;transform-origin:100% 0;transform:rotate(-30deg);">21 - 22</div>
<div class="r" style="left:1837.10px;top:837.99px;width:44.80px;height:95.21px;background:#3c74b6;"></div>
<div class="t" style="left:1559.60px;top:820.03px;font-size:12.6px;line-height:12.6px;color:#3a3a3a;letter-spacing:0.2px;width:600px;text-align:center;">18,89</div>
<div class="t" style="left:1777.00px;top:939.20px;width:80px;text-align:right;font-size:13.4px;line-height:13.4px;color:#555;transform-origin:100% 0;transform:rotate(-30deg);">22 - 23</div>
<div class="r" style="left:1901.10px;top:731.15px;width:44.80px;height:202.05px;background:#3c74b6;"></div>
<div class="t" style="left:1623.60px;top:713.18px;font-size:12.6px;line-height:12.6px;color:#3a3a3a;letter-spacing:0.2px;width:600px;text-align:center;">40,09</div>
<div class="t" style="left:1841.00px;top:939.20px;width:80px;text-align:right;font-size:13.4px;line-height:13.4px;color:#555;transform-origin:100% 0;transform:rotate(-30deg);">23 - 24</div>
</div>
</body></html>
